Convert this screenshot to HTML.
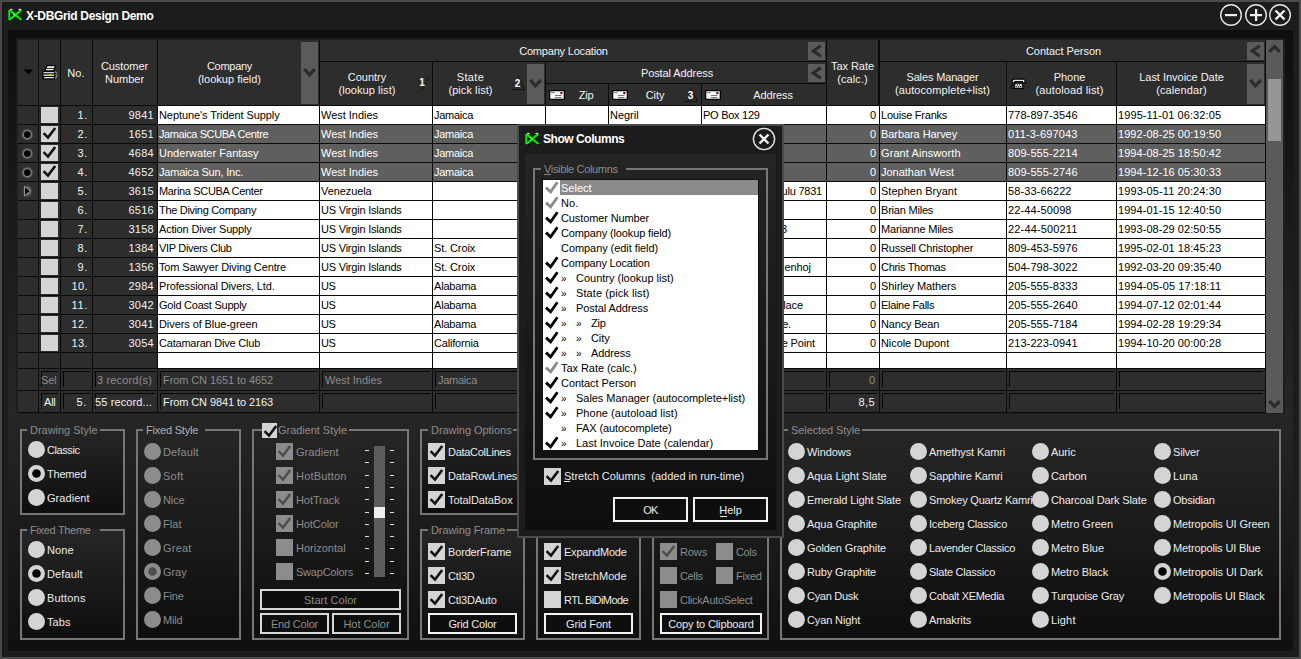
<!DOCTYPE html><html><head><meta charset="utf-8"><style>
html,body{margin:0;padding:0;}
body{width:1301px;height:659px;position:relative;overflow:hidden;background:#4b4b4b;font-family:'Liberation Sans',sans-serif;font-size:11px;}
div{position:absolute;}
.t{white-space:pre;line-height:13px;}
.cl{overflow:hidden;}
</style></head><body>
<div style="left:2px;top:2px;width:1297px;height:655px;background:#1c1c1c;"></div>
<div style="left:2px;top:2px;width:1px;height:655px;background:#161616;"></div>
<svg style="position:absolute;left:7px;top:8px;" width="17" height="14" viewBox="0 0 17 14"><path d="M3,2.5 L15.2,12.8 M15.2,2.5 L3,12.8" stroke="#000" stroke-width="2.6"/><path d="M2.4,1.9 L14.4,12 M14.4,1.9 L2.4,12" stroke="#00f000" stroke-width="2.2"/><path d="M2.2,2 L2.2,12" stroke="#00f000" stroke-width="1.8"/><path d="M3.2,1.4 L5.6,1.4 M11.4,1.4 L14.2,1.4" stroke="#fff" stroke-width="0.9"/><path d="M6,5.6 L8.4,7.6" stroke="#d8ffd8" stroke-width="0.8"/></svg>
<div class="t" style="top:10px;color:#ffffff;font-size:12px;font-weight:700;letter-spacing:-0.330px;left:26px;">X-DBGrid Design Demo</div>
<svg style="position:absolute;left:1219px;top:3px;" width="24" height="24" viewBox="0 0 24 24"><circle cx="12" cy="12" r="10.3" fill="none" stroke="#e6e6e6" stroke-width="1.4"/><rect x="6" y="11" width="12" height="2.2" fill="#f0f0f0"/></svg>
<svg style="position:absolute;left:1244px;top:3px;" width="24" height="24" viewBox="0 0 24 24"><circle cx="12" cy="12" r="10.3" fill="none" stroke="#e6e6e6" stroke-width="1.4"/><rect x="6" y="11" width="12" height="2.2" fill="#f0f0f0"/><rect x="11" y="6" width="2.2" height="12" fill="#f0f0f0"/></svg>
<svg style="position:absolute;left:1268px;top:3px;" width="24" height="24" viewBox="0 0 24 24"><circle cx="12" cy="12" r="10.3" fill="none" stroke="#e6e6e6" stroke-width="1.4"/><path d="M7.5,7.5 L16.5,16.5 M16.5,7.5 L7.5,16.5" stroke="#f0f0f0" stroke-width="2.4"/></svg>
<div style="left:8px;top:30px;width:1285px;height:383px;background:linear-gradient(#0e0e0e,#262626);"></div>
<div style="left:8px;top:413px;width:1285px;height:238px;background:linear-gradient(#262626,#101010);"></div>
<div style="left:16px;top:38px;width:1269px;height:376px;background:#1e1e1e;"></div>
<div style="left:18px;top:40px;width:1248px;height:373px;background:#0a0a0a;"></div>
<div style="left:18px;top:40px;width:20px;height:65px;background:#2d2d2d;"></div>
<div style="left:39px;top:40px;width:21px;height:65px;background:#2d2d2d;"></div>
<div style="left:61px;top:40px;width:31px;height:65px;background:#2d2d2d;"></div>
<div style="left:93px;top:40px;width:64px;height:65px;background:#2d2d2d;"></div>
<div style="left:158px;top:40px;width:161px;height:65px;background:#2d2d2d;"></div>
<div style="left:827px;top:40px;width:51px;height:65px;background:#2d2d2d;"></div>
<div style="left:320px;top:40px;width:506px;height:21px;background:#2d2d2d;"></div>
<div style="left:320px;top:62px;width:112px;height:43px;background:#2d2d2d;"></div>
<div style="left:433px;top:62px;width:112px;height:43px;background:#2d2d2d;"></div>
<div style="left:546px;top:62px;width:280px;height:21px;background:#2d2d2d;"></div>
<div style="left:546px;top:84px;width:62px;height:21px;background:#2d2d2d;"></div>
<div style="left:609px;top:84px;width:92px;height:21px;background:#2d2d2d;"></div>
<div style="left:702px;top:84px;width:124px;height:21px;background:#2d2d2d;"></div>
<div style="left:880px;top:40px;width:385px;height:21px;background:#2d2d2d;"></div>
<div style="left:880px;top:62px;width:126px;height:43px;background:#2d2d2d;"></div>
<div style="left:1007px;top:62px;width:109px;height:43px;background:#2d2d2d;"></div>
<div style="left:1117px;top:62px;width:148px;height:43px;background:#2d2d2d;"></div>
<div style="left:301px;top:42px;width:17px;height:62px;background:#5b5b5b;"></div>
<svg style="position:absolute;left:301px;top:42px;" width="17" height="62" viewBox="0 0 17 62"><polyline points="3.2,27.0 8.5,32.8 13.8,27.0" fill="none" stroke="#2b2b2b" stroke-width="3.3"/></svg>
<div style="left:527px;top:64px;width:17px;height:40px;background:#5b5b5b;"></div>
<svg style="position:absolute;left:527px;top:64px;" width="17" height="40" viewBox="0 0 17 40"><polyline points="3.2,16.0 8.5,21.8 13.8,16.0" fill="none" stroke="#2b2b2b" stroke-width="3.3"/></svg>
<div style="left:1247px;top:64px;width:17px;height:40px;background:#5b5b5b;"></div>
<svg style="position:absolute;left:1247px;top:64px;" width="17" height="40" viewBox="0 0 17 40"><polyline points="3.2,16.0 8.5,21.8 13.8,16.0" fill="none" stroke="#2b2b2b" stroke-width="3.3"/></svg>
<div style="left:808px;top:42px;width:17px;height:18px;background:#5b5b5b;"></div>
<svg style="position:absolute;left:808px;top:42px;" width="17" height="18" viewBox="0 0 17 18"><polyline points="12.8,3.8 5.3,9.0 12.8,14.2" fill="none" stroke="#2b2b2b" stroke-width="3.2"/></svg>
<div style="left:808px;top:64px;width:17px;height:18px;background:#5b5b5b;"></div>
<svg style="position:absolute;left:808px;top:64px;" width="17" height="18" viewBox="0 0 17 18"><polyline points="12.8,3.8 5.3,9.0 12.8,14.2" fill="none" stroke="#2b2b2b" stroke-width="3.2"/></svg>
<div style="left:1247px;top:42px;width:17px;height:18px;background:#5b5b5b;"></div>
<svg style="position:absolute;left:1247px;top:42px;" width="17" height="18" viewBox="0 0 17 18"><polyline points="12.8,3.8 5.3,9.0 12.8,14.2" fill="none" stroke="#2b2b2b" stroke-width="3.2"/></svg>
<svg style="position:absolute;left:23px;top:69px;" width="11" height="6" viewBox="0 0 11 6"><path d="M0.8,0.5 L10.2,0.5 L5.5,5.5 Z" fill="#000"/></svg>
<svg style="position:absolute;left:41px;top:64px;" width="18" height="16" viewBox="0 0 18 16"><path d="M6,1.6 L14.6,1.6 L12.6,7 L4,7 Z" fill="#fff" stroke="#000" stroke-width="1.3"/><rect x="6" y="3.9" width="7" height="0.9" fill="#000"/><rect x="1.3" y="7" width="13" height="8.6" rx="1.8" fill="#000"/><rect x="2.4" y="8.1" width="10.8" height="1.2" fill="#e6e6e6"/><rect x="2.4" y="10.5" width="10.8" height="1.5" fill="#d0d0d0"/><rect x="7.6" y="10.5" width="3" height="1.5" fill="#f0e000"/><rect x="3" y="13" width="9.8" height="1.3" fill="#e6e6e6"/><path d="M14,7.6 L16.4,9.6 M14.6,10.6 L16.4,12.2 M14,14.2 L16,12.8" stroke="#cfcfcf" stroke-width="0.9"/></svg>
<div class="t" style="top:67px;color:#f2f2f2;letter-spacing:0.158px;left:-124px;width:400px;text-align:center;">No.</div>
<div class="t" style="top:60px;color:#f2f2f2;letter-spacing:-0.073px;left:-75.5px;width:400px;text-align:center;">Customer</div>
<div class="t" style="top:73px;color:#f2f2f2;letter-spacing:-0.004px;left:-75.5px;width:400px;text-align:center;">Number</div>
<div class="t" style="top:60px;color:#f2f2f2;letter-spacing:-0.283px;left:29.5px;width:400px;text-align:center;">Company</div>
<div class="t" style="top:73px;color:#f2f2f2;letter-spacing:0.008px;left:29.5px;width:400px;text-align:center;">(lookup field)</div>
<div class="t" style="top:45px;color:#f2f2f2;letter-spacing:-0.196px;left:363.5px;width:400px;text-align:center;">Company Location</div>
<div class="t" style="top:71px;color:#f2f2f2;letter-spacing:0.010px;left:167px;width:400px;text-align:center;">Country</div>
<div class="t" style="top:84px;color:#f2f2f2;letter-spacing:0.065px;left:167px;width:400px;text-align:center;">(lookup list)</div>
<div class="t" style="top:71px;color:#f2f2f2;letter-spacing:0.383px;left:270.5px;width:400px;text-align:center;">State</div>
<div class="t" style="top:84px;color:#f2f2f2;letter-spacing:0.064px;left:270.5px;width:400px;text-align:center;">(pick list)</div>
<div class="t" style="top:67px;color:#f2f2f2;letter-spacing:-0.091px;left:477px;width:400px;text-align:center;">Postal Address</div>
<div class="t" style="top:89px;color:#f2f2f2;letter-spacing:-0.227px;left:386px;width:400px;text-align:center;">Zip</div>
<div class="t" style="top:89px;color:#f2f2f2;letter-spacing:-0.088px;left:455px;width:400px;text-align:center;">City</div>
<div class="t" style="top:89px;color:#f2f2f2;letter-spacing:-0.108px;left:573px;width:400px;text-align:center;">Address</div>
<div class="t" style="top:60px;color:#f2f2f2;letter-spacing:-0.040px;left:652.5px;width:400px;text-align:center;">Tax Rate</div>
<div class="t" style="top:73px;color:#f2f2f2;letter-spacing:0.092px;left:652.5px;width:400px;text-align:center;">(calc.)</div>
<div class="t" style="top:71px;color:#f2f2f2;letter-spacing:-0.146px;left:742.5px;width:400px;text-align:center;">Sales Manager</div>
<div class="t" style="top:84px;color:#f2f2f2;letter-spacing:0.097px;left:742.5px;width:400px;text-align:center;">(autocomplete+list)</div>
<div class="t" style="top:45px;color:#f2f2f2;letter-spacing:-0.052px;left:863.5px;width:400px;text-align:center;">Contact Person</div>
<div class="t" style="top:71px;color:#f2f2f2;letter-spacing:-0.042px;left:869.5px;width:400px;text-align:center;">Phone</div>
<div class="t" style="top:84px;color:#f2f2f2;letter-spacing:0.137px;left:869.5px;width:400px;text-align:center;">(autoload list)</div>
<div class="t" style="top:71px;color:#f2f2f2;letter-spacing:-0.024px;left:981.5px;width:400px;text-align:center;">Last Invoice Date</div>
<div class="t" style="top:84px;color:#f2f2f2;letter-spacing:0.107px;left:981.5px;width:400px;text-align:center;">(calendar)</div>
<svg style="position:absolute;left:415px;top:76px;" width="15" height="16" viewBox="0 0 15 16"><path d="M14,1 L7,14.5" fill="none" stroke="#111" stroke-width="1" stroke-dasharray="2,1"/><path d="M1,1 L7,14.5" fill="none" stroke="#262626" stroke-width="1"/><text x="7" y="10" font-family="Liberation Sans" font-weight="bold" font-size="10" fill="#fff" text-anchor="middle">1</text></svg>
<svg style="position:absolute;left:511px;top:75px;" width="15" height="16" viewBox="0 0 15 16"><path d="M7,0.5 L13.5,14.5 L0.5,14.5" fill="none" stroke="#111" stroke-width="1"/><text x="6.6" y="12.4" font-family="Liberation Sans" font-weight="bold" font-size="10" fill="#fff" text-anchor="middle">2</text></svg>
<svg style="position:absolute;left:684px;top:87px;" width="15" height="16" viewBox="0 0 15 16"><path d="M7,0.5 L13.5,14.5 L0.5,14.5" fill="none" stroke="#111" stroke-width="1"/><text x="6.6" y="12.4" font-family="Liberation Sans" font-weight="bold" font-size="10" fill="#fff" text-anchor="middle">3</text></svg>
<svg style="position:absolute;left:549px;top:90px;" width="16" height="10" viewBox="0 0 16 10"><rect x="0.65" y="0.65" width="14.7" height="8.7" rx="0.8" fill="#fafafa" stroke="#000" stroke-width="1.3"/><rect x="11.3" y="2" width="2.1" height="2.1" fill="#8a0000"/><rect x="2" y="2.3" width="3.6" height="0.8" fill="#555"/><rect x="6" y="5.2" width="6.5" height="0.8" fill="#555"/><rect x="6" y="7.1" width="6.5" height="0.8" fill="#555"/></svg>
<svg style="position:absolute;left:612px;top:90px;" width="16" height="10" viewBox="0 0 16 10"><rect x="0.65" y="0.65" width="14.7" height="8.7" rx="0.8" fill="#fafafa" stroke="#000" stroke-width="1.3"/><rect x="11.3" y="2" width="2.1" height="2.1" fill="#8a0000"/><rect x="2" y="2.3" width="3.6" height="0.8" fill="#555"/><rect x="6" y="5.2" width="6.5" height="0.8" fill="#555"/><rect x="6" y="7.1" width="6.5" height="0.8" fill="#555"/></svg>
<svg style="position:absolute;left:705px;top:90px;" width="16" height="10" viewBox="0 0 16 10"><rect x="0.65" y="0.65" width="14.7" height="8.7" rx="0.8" fill="#fafafa" stroke="#000" stroke-width="1.3"/><rect x="11.3" y="2" width="2.1" height="2.1" fill="#8a0000"/><rect x="2" y="2.3" width="3.6" height="0.8" fill="#555"/><rect x="6" y="5.2" width="6.5" height="0.8" fill="#555"/><rect x="6" y="7.1" width="6.5" height="0.8" fill="#555"/></svg>
<svg style="position:absolute;left:1009px;top:78px;" width="18" height="12" viewBox="0 0 18 12"><path d="M3.2,4.9 L3.2,2.6 Q4,1.1 5.2,1.1 L14,1.1 Q15.2,1.1 16,2.6 L16,4.9 L13.4,4.9 L13.4,3.6 L5.8,3.6 L5.8,4.9 Z" fill="#e6e6e6" stroke="#000" stroke-width="1.1"/><path d="M6.2,5.2 L13,5.2 L14.2,10.4 L5,10.4 Z" fill="#f2f2f2" stroke="#000" stroke-width="1.1"/><circle cx="8.4" cy="6.9" r="0.7" fill="#000"/><circle cx="10.6" cy="6.9" r="0.7" fill="#000"/><circle cx="7.2" cy="8.8" r="0.7" fill="#000"/><circle cx="9.5" cy="8.8" r="0.7" fill="#000"/><circle cx="11.8" cy="8.8" r="0.7" fill="#000"/><path d="M5,6.8 Q1.3,6.8 1.7,9.2 Q2.1,10.8 5,10.6" fill="none" stroke="#000" stroke-width="0.9"/></svg>
<div style="left:18px;top:106px;width:20px;height:18px;background:#2d2d2d;"></div>
<div style="left:39px;top:106px;width:21px;height:18px;background:#2d2d2d;"></div>
<div style="left:61px;top:106px;width:31px;height:18px;background:#2d2d2d;"></div>
<div style="left:93px;top:106px;width:64px;height:18px;background:#2d2d2d;"></div>
<div style="left:158px;top:106px;width:161px;height:18px;background:#ffffff;"></div>
<div style="left:320px;top:106px;width:112px;height:18px;background:#ffffff;"></div>
<div style="left:433px;top:106px;width:112px;height:18px;background:#ffffff;"></div>
<div style="left:546px;top:106px;width:62px;height:18px;background:#ffffff;"></div>
<div style="left:609px;top:106px;width:92px;height:18px;background:#ffffff;"></div>
<div style="left:702px;top:106px;width:124px;height:18px;background:#ffffff;"></div>
<div style="left:827px;top:106px;width:52px;height:18px;background:#ffffff;"></div>
<div style="left:880px;top:106px;width:126px;height:18px;background:#ffffff;"></div>
<div style="left:1007px;top:106px;width:109px;height:18px;background:#ffffff;"></div>
<div style="left:1117px;top:106px;width:148px;height:18px;background:#ffffff;"></div>
<div style="left:41px;top:107px;width:17px;height:16px;background:#d4d4d4;"></div>
<div class="t" style="top:109px;color:#f2f2f2;letter-spacing:0.706px;left:-212px;width:300px;text-align:right;">1.</div>
<div class="t" style="top:109px;color:#f2f2f2;letter-spacing:0.279px;left:-146px;width:300px;text-align:right;">9841</div>
<div class="t" style="top:109px;color:#000000;letter-spacing:-0.082px;left:159px;">Neptune&#x27;s Trident Supply</div>
<div class="t" style="top:109px;color:#000000;letter-spacing:-0.016px;left:321px;">West Indies</div>
<div class="t" style="top:109px;color:#000000;letter-spacing:-0.267px;left:434px;">Jamaica</div>
<div class="t" style="top:109px;color:#000000;letter-spacing:-0.022px;left:610px;">Negril</div>
<div class="t" style="top:109px;color:#000000;letter-spacing:-0.273px;left:703px;">PO Box 129</div>
<div class="t" style="top:109px;color:#000000;left:576px;width:300px;text-align:right;">0</div>
<div class="t" style="top:109px;color:#000000;letter-spacing:-0.230px;left:881px;">Louise Franks</div>
<div class="t" style="top:109px;color:#000000;letter-spacing:0.090px;left:1008px;">778-897-3546</div>
<div class="t" style="top:109px;color:#000000;letter-spacing:0.093px;left:1118px;">1995-11-01 06:32:05</div>
<div style="left:18px;top:125px;width:20px;height:18px;background:#2d2d2d;"></div>
<div style="left:39px;top:125px;width:21px;height:18px;background:#2d2d2d;"></div>
<div style="left:61px;top:125px;width:31px;height:18px;background:#2d2d2d;"></div>
<div style="left:93px;top:125px;width:64px;height:18px;background:#2d2d2d;"></div>
<div style="left:158px;top:125px;width:161px;height:18px;background:#5f5f5f;"></div>
<div style="left:320px;top:125px;width:112px;height:18px;background:#5f5f5f;"></div>
<div style="left:433px;top:125px;width:112px;height:18px;background:#5f5f5f;"></div>
<div style="left:546px;top:125px;width:62px;height:18px;background:#5f5f5f;"></div>
<div style="left:609px;top:125px;width:92px;height:18px;background:#5f5f5f;"></div>
<div style="left:702px;top:125px;width:124px;height:18px;background:#5f5f5f;"></div>
<div style="left:827px;top:125px;width:52px;height:18px;background:#5f5f5f;"></div>
<div style="left:880px;top:125px;width:126px;height:18px;background:#5f5f5f;"></div>
<div style="left:1007px;top:125px;width:109px;height:18px;background:#5f5f5f;"></div>
<div style="left:1117px;top:125px;width:148px;height:18px;background:#5f5f5f;"></div>
<div style="left:41px;top:126px;width:17px;height:16px;background:#d4d4d4;"></div>
<svg style="position:absolute;left:41px;top:125px;" width="17" height="17" viewBox="0 0 17 17"><polyline points="2.6,8.2 7,12.6 14.2,3" fill="none" stroke="#111" stroke-width="2.6" stroke-linecap="butt" stroke-linejoin="miter"/></svg>
<svg style="position:absolute;left:20px;top:127px;" width="15" height="15" viewBox="0 0 15 15"><defs><radialGradient id="gl1"><stop offset="0.55" stop-color="#bbb" stop-opacity="0.55"/><stop offset="1" stop-color="#2d2d2d" stop-opacity="0"/></radialGradient></defs><circle cx="7.3" cy="7.6" r="7" fill="url(#gl1)"/><circle cx="7.3" cy="7.6" r="4" fill="#000" stroke="#a8a8a8" stroke-width="0.8"/></svg>
<div class="t" style="top:128px;color:#f2f2f2;letter-spacing:0.706px;left:-212px;width:300px;text-align:right;">2.</div>
<div class="t" style="top:128px;color:#f2f2f2;letter-spacing:0.279px;left:-146px;width:300px;text-align:right;">1651</div>
<div class="t" style="top:128px;color:#ffffff;letter-spacing:-0.415px;left:159px;">Jamaica SCUBA Centre</div>
<div class="t" style="top:128px;color:#ffffff;letter-spacing:-0.016px;left:321px;">West Indies</div>
<div class="t" style="top:128px;color:#ffffff;letter-spacing:-0.267px;left:434px;">Jamaica</div>
<div class="t" style="top:128px;color:#ffffff;left:610px;"></div>
<div class="t" style="top:128px;color:#ffffff;left:576px;width:300px;text-align:right;">0</div>
<div class="t" style="top:128px;color:#ffffff;letter-spacing:-0.068px;left:881px;">Barbara Harvey</div>
<div class="t" style="top:128px;color:#ffffff;letter-spacing:0.159px;left:1008px;">011-3-697043</div>
<div class="t" style="top:128px;color:#ffffff;letter-spacing:0.050px;left:1118px;">1992-08-25 00:19:50</div>
<div style="left:18px;top:144px;width:20px;height:18px;background:#2d2d2d;"></div>
<div style="left:39px;top:144px;width:21px;height:18px;background:#2d2d2d;"></div>
<div style="left:61px;top:144px;width:31px;height:18px;background:#2d2d2d;"></div>
<div style="left:93px;top:144px;width:64px;height:18px;background:#2d2d2d;"></div>
<div style="left:158px;top:144px;width:161px;height:18px;background:#5f5f5f;"></div>
<div style="left:320px;top:144px;width:112px;height:18px;background:#5f5f5f;"></div>
<div style="left:433px;top:144px;width:112px;height:18px;background:#5f5f5f;"></div>
<div style="left:546px;top:144px;width:62px;height:18px;background:#5f5f5f;"></div>
<div style="left:609px;top:144px;width:92px;height:18px;background:#5f5f5f;"></div>
<div style="left:702px;top:144px;width:124px;height:18px;background:#5f5f5f;"></div>
<div style="left:827px;top:144px;width:52px;height:18px;background:#5f5f5f;"></div>
<div style="left:880px;top:144px;width:126px;height:18px;background:#5f5f5f;"></div>
<div style="left:1007px;top:144px;width:109px;height:18px;background:#5f5f5f;"></div>
<div style="left:1117px;top:144px;width:148px;height:18px;background:#5f5f5f;"></div>
<div style="left:41px;top:145px;width:17px;height:16px;background:#d4d4d4;"></div>
<svg style="position:absolute;left:41px;top:144px;" width="17" height="17" viewBox="0 0 17 17"><polyline points="2.6,8.2 7,12.6 14.2,3" fill="none" stroke="#111" stroke-width="2.6" stroke-linecap="butt" stroke-linejoin="miter"/></svg>
<svg style="position:absolute;left:20px;top:146px;" width="15" height="15" viewBox="0 0 15 15"><defs><radialGradient id="gl2"><stop offset="0.55" stop-color="#bbb" stop-opacity="0.55"/><stop offset="1" stop-color="#2d2d2d" stop-opacity="0"/></radialGradient></defs><circle cx="7.3" cy="7.6" r="7" fill="url(#gl2)"/><circle cx="7.3" cy="7.6" r="4" fill="#000" stroke="#a8a8a8" stroke-width="0.8"/></svg>
<div class="t" style="top:147px;color:#f2f2f2;letter-spacing:0.706px;left:-212px;width:300px;text-align:right;">3.</div>
<div class="t" style="top:147px;color:#f2f2f2;letter-spacing:0.279px;left:-146px;width:300px;text-align:right;">4684</div>
<div class="t" style="top:147px;color:#ffffff;letter-spacing:0.031px;left:159px;">Underwater Fantasy</div>
<div class="t" style="top:147px;color:#ffffff;letter-spacing:-0.016px;left:321px;">West Indies</div>
<div class="t" style="top:147px;color:#ffffff;letter-spacing:-0.267px;left:434px;">Jamaica</div>
<div class="t" style="top:147px;color:#ffffff;left:610px;"></div>
<div class="t" style="top:147px;color:#ffffff;left:576px;width:300px;text-align:right;">0</div>
<div class="t" style="top:147px;color:#ffffff;letter-spacing:0.089px;left:881px;">Grant Ainsworth</div>
<div class="t" style="top:147px;color:#ffffff;letter-spacing:0.090px;left:1008px;">809-555-2214</div>
<div class="t" style="top:147px;color:#ffffff;letter-spacing:0.050px;left:1118px;">1994-08-25 18:50:42</div>
<div style="left:18px;top:163px;width:20px;height:18px;background:#2d2d2d;"></div>
<div style="left:39px;top:163px;width:21px;height:18px;background:#2d2d2d;"></div>
<div style="left:61px;top:163px;width:31px;height:18px;background:#2d2d2d;"></div>
<div style="left:93px;top:163px;width:64px;height:18px;background:#2d2d2d;"></div>
<div style="left:158px;top:163px;width:161px;height:18px;background:#5f5f5f;"></div>
<div style="left:320px;top:163px;width:112px;height:18px;background:#5f5f5f;"></div>
<div style="left:433px;top:163px;width:112px;height:18px;background:#5f5f5f;"></div>
<div style="left:546px;top:163px;width:62px;height:18px;background:#5f5f5f;"></div>
<div style="left:609px;top:163px;width:92px;height:18px;background:#5f5f5f;"></div>
<div style="left:702px;top:163px;width:124px;height:18px;background:#5f5f5f;"></div>
<div style="left:827px;top:163px;width:52px;height:18px;background:#5f5f5f;"></div>
<div style="left:880px;top:163px;width:126px;height:18px;background:#5f5f5f;"></div>
<div style="left:1007px;top:163px;width:109px;height:18px;background:#5f5f5f;"></div>
<div style="left:1117px;top:163px;width:148px;height:18px;background:#5f5f5f;"></div>
<div style="left:41px;top:164px;width:17px;height:16px;background:#d4d4d4;"></div>
<svg style="position:absolute;left:41px;top:163px;" width="17" height="17" viewBox="0 0 17 17"><polyline points="2.6,8.2 7,12.6 14.2,3" fill="none" stroke="#111" stroke-width="2.6" stroke-linecap="butt" stroke-linejoin="miter"/></svg>
<svg style="position:absolute;left:20px;top:165px;" width="15" height="15" viewBox="0 0 15 15"><defs><radialGradient id="gl3"><stop offset="0.55" stop-color="#bbb" stop-opacity="0.55"/><stop offset="1" stop-color="#2d2d2d" stop-opacity="0"/></radialGradient></defs><circle cx="7.3" cy="7.6" r="7" fill="url(#gl3)"/><circle cx="7.3" cy="7.6" r="4" fill="#000" stroke="#a8a8a8" stroke-width="0.8"/></svg>
<div class="t" style="top:166px;color:#f2f2f2;letter-spacing:0.706px;left:-212px;width:300px;text-align:right;">4.</div>
<div class="t" style="top:166px;color:#f2f2f2;letter-spacing:0.279px;left:-146px;width:300px;text-align:right;">4652</div>
<div class="t" style="top:166px;color:#ffffff;letter-spacing:-0.196px;left:159px;">Jamaica Sun, Inc.</div>
<div class="t" style="top:166px;color:#ffffff;letter-spacing:-0.016px;left:321px;">West Indies</div>
<div class="t" style="top:166px;color:#ffffff;letter-spacing:-0.267px;left:434px;">Jamaica</div>
<div class="t" style="top:166px;color:#ffffff;left:610px;"></div>
<div class="t" style="top:166px;color:#ffffff;left:576px;width:300px;text-align:right;">0</div>
<div class="t" style="top:166px;color:#ffffff;letter-spacing:-0.007px;left:881px;">Jonathan West</div>
<div class="t" style="top:166px;color:#ffffff;letter-spacing:0.090px;left:1008px;">809-555-2746</div>
<div class="t" style="top:166px;color:#ffffff;letter-spacing:0.050px;left:1118px;">1994-12-16 05:30:33</div>
<div style="left:18px;top:182px;width:20px;height:18px;background:#2d2d2d;"></div>
<div style="left:39px;top:182px;width:21px;height:18px;background:#2d2d2d;"></div>
<div style="left:61px;top:182px;width:31px;height:18px;background:#2d2d2d;"></div>
<div style="left:93px;top:182px;width:64px;height:18px;background:#2d2d2d;"></div>
<div style="left:158px;top:182px;width:161px;height:18px;background:#ffffff;"></div>
<div style="left:320px;top:182px;width:112px;height:18px;background:#ffffff;"></div>
<div style="left:433px;top:182px;width:112px;height:18px;background:#ffffff;"></div>
<div style="left:546px;top:182px;width:62px;height:18px;background:#ffffff;"></div>
<div style="left:609px;top:182px;width:92px;height:18px;background:#ffffff;"></div>
<div style="left:702px;top:182px;width:124px;height:18px;background:#ffffff;"></div>
<div style="left:827px;top:182px;width:52px;height:18px;background:#ffffff;"></div>
<div style="left:880px;top:182px;width:126px;height:18px;background:#ffffff;"></div>
<div style="left:1007px;top:182px;width:109px;height:18px;background:#ffffff;"></div>
<div style="left:1117px;top:182px;width:148px;height:18px;background:#ffffff;"></div>
<div style="left:41px;top:183px;width:17px;height:16px;background:#d4d4d4;"></div>
<svg style="position:absolute;left:18px;top:182px;" width="20" height="18" viewBox="0 0 20 18"><defs><radialGradient id="gtri"><stop offset="0.45" stop-color="#aaa" stop-opacity="0.5"/><stop offset="1" stop-color="#2d2d2d" stop-opacity="0"/></radialGradient></defs><ellipse cx="9.5" cy="9" rx="6" ry="7.5" fill="url(#gtri)"/><path d="M6.6,4.4 L12.4,9.2 L6.6,14 Z" fill="#000" stroke="#a0a0a0" stroke-width="1" stroke-linejoin="round"/></svg>
<div class="t" style="top:185px;color:#f2f2f2;letter-spacing:0.706px;left:-212px;width:300px;text-align:right;">5.</div>
<div class="t" style="top:185px;color:#f2f2f2;letter-spacing:0.279px;left:-146px;width:300px;text-align:right;">3615</div>
<div class="t" style="top:185px;color:#000000;letter-spacing:-0.339px;left:159px;">Marina SCUBA Center</div>
<div class="t" style="top:185px;color:#000000;letter-spacing:-0.088px;left:321px;">Venezuela</div>
<div class="t" style="top:185px;color:#000000;left:434px;"></div>
<div class="t" style="top:185px;color:#000000;left:610px;"></div>
<div class="t" style="top:185px;color:#000000;letter-spacing:-0.224px;left:522px;width:300px;text-align:right;">PO Box 82438 Zulu 7831</div>
<div class="t" style="top:185px;color:#000000;left:576px;width:300px;text-align:right;">0</div>
<div class="t" style="top:185px;color:#000000;letter-spacing:0.018px;left:881px;">Stephen Bryant</div>
<div class="t" style="top:185px;color:#000000;letter-spacing:0.110px;left:1008px;">58-33-66222</div>
<div class="t" style="top:185px;color:#000000;letter-spacing:0.093px;left:1118px;">1993-05-11 20:24:30</div>
<div style="left:18px;top:201px;width:20px;height:18px;background:#2d2d2d;"></div>
<div style="left:39px;top:201px;width:21px;height:18px;background:#2d2d2d;"></div>
<div style="left:61px;top:201px;width:31px;height:18px;background:#2d2d2d;"></div>
<div style="left:93px;top:201px;width:64px;height:18px;background:#2d2d2d;"></div>
<div style="left:158px;top:201px;width:161px;height:18px;background:#ffffff;"></div>
<div style="left:320px;top:201px;width:112px;height:18px;background:#ffffff;"></div>
<div style="left:433px;top:201px;width:112px;height:18px;background:#ffffff;"></div>
<div style="left:546px;top:201px;width:62px;height:18px;background:#ffffff;"></div>
<div style="left:609px;top:201px;width:92px;height:18px;background:#ffffff;"></div>
<div style="left:702px;top:201px;width:124px;height:18px;background:#ffffff;"></div>
<div style="left:827px;top:201px;width:52px;height:18px;background:#ffffff;"></div>
<div style="left:880px;top:201px;width:126px;height:18px;background:#ffffff;"></div>
<div style="left:1007px;top:201px;width:109px;height:18px;background:#ffffff;"></div>
<div style="left:1117px;top:201px;width:148px;height:18px;background:#ffffff;"></div>
<div style="left:41px;top:202px;width:17px;height:16px;background:#d4d4d4;"></div>
<div class="t" style="top:204px;color:#f2f2f2;letter-spacing:0.706px;left:-212px;width:300px;text-align:right;">6.</div>
<div class="t" style="top:204px;color:#f2f2f2;letter-spacing:0.279px;left:-146px;width:300px;text-align:right;">6516</div>
<div class="t" style="top:204px;color:#000000;letter-spacing:-0.312px;left:159px;">The Diving Company</div>
<div class="t" style="top:204px;color:#000000;letter-spacing:-0.210px;left:321px;">US Virgin Islands</div>
<div class="t" style="top:204px;color:#000000;left:434px;"></div>
<div class="t" style="top:204px;color:#000000;left:610px;"></div>
<div class="t" style="top:204px;color:#000000;left:576px;width:300px;text-align:right;">0</div>
<div class="t" style="top:204px;color:#000000;letter-spacing:-0.210px;left:881px;">Brian Miles</div>
<div class="t" style="top:204px;color:#000000;letter-spacing:0.110px;left:1008px;">22-44-50098</div>
<div class="t" style="top:204px;color:#000000;letter-spacing:0.050px;left:1118px;">1994-01-15 12:40:50</div>
<div style="left:18px;top:220px;width:20px;height:18px;background:#2d2d2d;"></div>
<div style="left:39px;top:220px;width:21px;height:18px;background:#2d2d2d;"></div>
<div style="left:61px;top:220px;width:31px;height:18px;background:#2d2d2d;"></div>
<div style="left:93px;top:220px;width:64px;height:18px;background:#2d2d2d;"></div>
<div style="left:158px;top:220px;width:161px;height:18px;background:#ffffff;"></div>
<div style="left:320px;top:220px;width:112px;height:18px;background:#ffffff;"></div>
<div style="left:433px;top:220px;width:112px;height:18px;background:#ffffff;"></div>
<div style="left:546px;top:220px;width:62px;height:18px;background:#ffffff;"></div>
<div style="left:609px;top:220px;width:92px;height:18px;background:#ffffff;"></div>
<div style="left:702px;top:220px;width:124px;height:18px;background:#ffffff;"></div>
<div style="left:827px;top:220px;width:52px;height:18px;background:#ffffff;"></div>
<div style="left:880px;top:220px;width:126px;height:18px;background:#ffffff;"></div>
<div style="left:1007px;top:220px;width:109px;height:18px;background:#ffffff;"></div>
<div style="left:1117px;top:220px;width:148px;height:18px;background:#ffffff;"></div>
<div style="left:41px;top:221px;width:17px;height:16px;background:#d4d4d4;"></div>
<div class="t" style="top:223px;color:#f2f2f2;letter-spacing:0.706px;left:-212px;width:300px;text-align:right;">7.</div>
<div class="t" style="top:223px;color:#f2f2f2;letter-spacing:0.279px;left:-146px;width:300px;text-align:right;">3158</div>
<div class="t" style="top:223px;color:#000000;letter-spacing:-0.179px;left:159px;">Action Diver Supply</div>
<div class="t" style="top:223px;color:#000000;letter-spacing:-0.210px;left:321px;">US Virgin Islands</div>
<div class="t" style="top:223px;color:#000000;left:434px;"></div>
<div class="t" style="top:223px;color:#000000;left:610px;"></div>
<div class="t" style="top:223px;color:#000000;letter-spacing:-0.033px;left:487px;width:300px;text-align:right;">Blue Spar Box #3</div>
<div class="t" style="top:223px;color:#000000;left:576px;width:300px;text-align:right;">0</div>
<div class="t" style="top:223px;color:#000000;letter-spacing:-0.178px;left:881px;">Marianne Miles</div>
<div class="t" style="top:223px;color:#000000;letter-spacing:0.159px;left:1008px;">22-44-500211</div>
<div class="t" style="top:223px;color:#000000;letter-spacing:0.050px;left:1118px;">1993-08-29 02:50:55</div>
<div style="left:18px;top:239px;width:20px;height:18px;background:#2d2d2d;"></div>
<div style="left:39px;top:239px;width:21px;height:18px;background:#2d2d2d;"></div>
<div style="left:61px;top:239px;width:31px;height:18px;background:#2d2d2d;"></div>
<div style="left:93px;top:239px;width:64px;height:18px;background:#2d2d2d;"></div>
<div style="left:158px;top:239px;width:161px;height:18px;background:#ffffff;"></div>
<div style="left:320px;top:239px;width:112px;height:18px;background:#ffffff;"></div>
<div style="left:433px;top:239px;width:112px;height:18px;background:#ffffff;"></div>
<div style="left:546px;top:239px;width:62px;height:18px;background:#ffffff;"></div>
<div style="left:609px;top:239px;width:92px;height:18px;background:#ffffff;"></div>
<div style="left:702px;top:239px;width:124px;height:18px;background:#ffffff;"></div>
<div style="left:827px;top:239px;width:52px;height:18px;background:#ffffff;"></div>
<div style="left:880px;top:239px;width:126px;height:18px;background:#ffffff;"></div>
<div style="left:1007px;top:239px;width:109px;height:18px;background:#ffffff;"></div>
<div style="left:1117px;top:239px;width:148px;height:18px;background:#ffffff;"></div>
<div style="left:41px;top:240px;width:17px;height:16px;background:#d4d4d4;"></div>
<div class="t" style="top:242px;color:#f2f2f2;letter-spacing:0.706px;left:-212px;width:300px;text-align:right;">8.</div>
<div class="t" style="top:242px;color:#f2f2f2;letter-spacing:0.279px;left:-146px;width:300px;text-align:right;">1384</div>
<div class="t" style="top:242px;color:#000000;letter-spacing:-0.323px;left:159px;">VIP Divers Club</div>
<div class="t" style="top:242px;color:#000000;letter-spacing:-0.210px;left:321px;">US Virgin Islands</div>
<div class="t" style="top:242px;color:#000000;letter-spacing:-0.121px;left:434px;">St. Croix</div>
<div class="t" style="top:242px;color:#000000;left:610px;"></div>
<div class="t" style="top:242px;color:#000000;left:576px;width:300px;text-align:right;">0</div>
<div class="t" style="top:242px;color:#000000;letter-spacing:-0.204px;left:881px;">Russell Christopher</div>
<div class="t" style="top:242px;color:#000000;letter-spacing:0.090px;left:1008px;">809-453-5976</div>
<div class="t" style="top:242px;color:#000000;letter-spacing:0.050px;left:1118px;">1995-02-01 18:45:23</div>
<div style="left:18px;top:258px;width:20px;height:18px;background:#2d2d2d;"></div>
<div style="left:39px;top:258px;width:21px;height:18px;background:#2d2d2d;"></div>
<div style="left:61px;top:258px;width:31px;height:18px;background:#2d2d2d;"></div>
<div style="left:93px;top:258px;width:64px;height:18px;background:#2d2d2d;"></div>
<div style="left:158px;top:258px;width:161px;height:18px;background:#ffffff;"></div>
<div style="left:320px;top:258px;width:112px;height:18px;background:#ffffff;"></div>
<div style="left:433px;top:258px;width:112px;height:18px;background:#ffffff;"></div>
<div style="left:546px;top:258px;width:62px;height:18px;background:#ffffff;"></div>
<div style="left:609px;top:258px;width:92px;height:18px;background:#ffffff;"></div>
<div style="left:702px;top:258px;width:124px;height:18px;background:#ffffff;"></div>
<div style="left:827px;top:258px;width:52px;height:18px;background:#ffffff;"></div>
<div style="left:880px;top:258px;width:126px;height:18px;background:#ffffff;"></div>
<div style="left:1007px;top:258px;width:109px;height:18px;background:#ffffff;"></div>
<div style="left:1117px;top:258px;width:148px;height:18px;background:#ffffff;"></div>
<div style="left:41px;top:259px;width:17px;height:16px;background:#d4d4d4;"></div>
<div class="t" style="top:261px;color:#f2f2f2;letter-spacing:0.706px;left:-212px;width:300px;text-align:right;">9.</div>
<div class="t" style="top:261px;color:#f2f2f2;letter-spacing:0.279px;left:-146px;width:300px;text-align:right;">1356</div>
<div class="t" style="top:261px;color:#000000;letter-spacing:-0.130px;left:159px;">Tom Sawyer Diving Centre</div>
<div class="t" style="top:261px;color:#000000;letter-spacing:-0.210px;left:321px;">US Virgin Islands</div>
<div class="t" style="top:261px;color:#000000;letter-spacing:-0.121px;left:434px;">St. Croix</div>
<div class="t" style="top:261px;color:#000000;left:610px;"></div>
<div class="t" style="top:261px;color:#000000;letter-spacing:-0.068px;left:511px;width:300px;text-align:right;">632-1 Third Frydenhoj</div>
<div class="t" style="top:261px;color:#000000;left:576px;width:300px;text-align:right;">0</div>
<div class="t" style="top:261px;color:#000000;letter-spacing:-0.305px;left:881px;">Chris Thomas</div>
<div class="t" style="top:261px;color:#000000;letter-spacing:0.090px;left:1008px;">504-798-3022</div>
<div class="t" style="top:261px;color:#000000;letter-spacing:0.050px;left:1118px;">1992-03-20 09:35:40</div>
<div style="left:18px;top:277px;width:20px;height:18px;background:#2d2d2d;"></div>
<div style="left:39px;top:277px;width:21px;height:18px;background:#2d2d2d;"></div>
<div style="left:61px;top:277px;width:31px;height:18px;background:#2d2d2d;"></div>
<div style="left:93px;top:277px;width:64px;height:18px;background:#2d2d2d;"></div>
<div style="left:158px;top:277px;width:161px;height:18px;background:#ffffff;"></div>
<div style="left:320px;top:277px;width:112px;height:18px;background:#ffffff;"></div>
<div style="left:433px;top:277px;width:112px;height:18px;background:#ffffff;"></div>
<div style="left:546px;top:277px;width:62px;height:18px;background:#ffffff;"></div>
<div style="left:609px;top:277px;width:92px;height:18px;background:#ffffff;"></div>
<div style="left:702px;top:277px;width:124px;height:18px;background:#ffffff;"></div>
<div style="left:827px;top:277px;width:52px;height:18px;background:#ffffff;"></div>
<div style="left:880px;top:277px;width:126px;height:18px;background:#ffffff;"></div>
<div style="left:1007px;top:277px;width:109px;height:18px;background:#ffffff;"></div>
<div style="left:1117px;top:277px;width:148px;height:18px;background:#ffffff;"></div>
<div style="left:41px;top:278px;width:17px;height:16px;background:#d4d4d4;"></div>
<div class="t" style="top:280px;color:#f2f2f2;letter-spacing:0.434px;left:-212px;width:300px;text-align:right;">10.</div>
<div class="t" style="top:280px;color:#f2f2f2;letter-spacing:0.279px;left:-146px;width:300px;text-align:right;">2984</div>
<div class="t" style="top:280px;color:#000000;letter-spacing:-0.145px;left:159px;">Professional Divers, Ltd.</div>
<div class="t" style="top:280px;color:#000000;letter-spacing:-0.341px;left:321px;">US</div>
<div class="t" style="top:280px;color:#000000;letter-spacing:-0.189px;left:434px;">Alabama</div>
<div class="t" style="top:280px;color:#000000;left:610px;"></div>
<div class="t" style="top:280px;color:#000000;left:576px;width:300px;text-align:right;">0</div>
<div class="t" style="top:280px;color:#000000;letter-spacing:-0.088px;left:881px;">Shirley Mathers</div>
<div class="t" style="top:280px;color:#000000;letter-spacing:0.090px;left:1008px;">205-555-8333</div>
<div class="t" style="top:280px;color:#000000;letter-spacing:0.093px;left:1118px;">1994-05-05 17:18:11</div>
<div style="left:18px;top:296px;width:20px;height:18px;background:#2d2d2d;"></div>
<div style="left:39px;top:296px;width:21px;height:18px;background:#2d2d2d;"></div>
<div style="left:61px;top:296px;width:31px;height:18px;background:#2d2d2d;"></div>
<div style="left:93px;top:296px;width:64px;height:18px;background:#2d2d2d;"></div>
<div style="left:158px;top:296px;width:161px;height:18px;background:#ffffff;"></div>
<div style="left:320px;top:296px;width:112px;height:18px;background:#ffffff;"></div>
<div style="left:433px;top:296px;width:112px;height:18px;background:#ffffff;"></div>
<div style="left:546px;top:296px;width:62px;height:18px;background:#ffffff;"></div>
<div style="left:609px;top:296px;width:92px;height:18px;background:#ffffff;"></div>
<div style="left:702px;top:296px;width:124px;height:18px;background:#ffffff;"></div>
<div style="left:827px;top:296px;width:52px;height:18px;background:#ffffff;"></div>
<div style="left:880px;top:296px;width:126px;height:18px;background:#ffffff;"></div>
<div style="left:1007px;top:296px;width:109px;height:18px;background:#ffffff;"></div>
<div style="left:1117px;top:296px;width:148px;height:18px;background:#ffffff;"></div>
<div style="left:41px;top:297px;width:17px;height:16px;background:#d4d4d4;"></div>
<div class="t" style="top:299px;color:#f2f2f2;letter-spacing:0.705px;left:-212px;width:300px;text-align:right;">11.</div>
<div class="t" style="top:299px;color:#f2f2f2;letter-spacing:0.279px;left:-146px;width:300px;text-align:right;">3042</div>
<div class="t" style="top:299px;color:#000000;letter-spacing:-0.242px;left:159px;">Gold Coast Supply</div>
<div class="t" style="top:299px;color:#000000;letter-spacing:-0.341px;left:321px;">US</div>
<div class="t" style="top:299px;color:#000000;letter-spacing:-0.189px;left:434px;">Alabama</div>
<div class="t" style="top:299px;color:#000000;left:610px;"></div>
<div class="t" style="top:299px;color:#000000;letter-spacing:-0.124px;left:503px;width:300px;text-align:right;">223-B Houston Place</div>
<div class="t" style="top:299px;color:#000000;left:576px;width:300px;text-align:right;">0</div>
<div class="t" style="top:299px;color:#000000;letter-spacing:-0.313px;left:881px;">Elaine Falls</div>
<div class="t" style="top:299px;color:#000000;letter-spacing:0.090px;left:1008px;">205-555-2640</div>
<div class="t" style="top:299px;color:#000000;letter-spacing:0.050px;left:1118px;">1994-07-12 02:01:44</div>
<div style="left:18px;top:315px;width:20px;height:18px;background:#2d2d2d;"></div>
<div style="left:39px;top:315px;width:21px;height:18px;background:#2d2d2d;"></div>
<div style="left:61px;top:315px;width:31px;height:18px;background:#2d2d2d;"></div>
<div style="left:93px;top:315px;width:64px;height:18px;background:#2d2d2d;"></div>
<div style="left:158px;top:315px;width:161px;height:18px;background:#ffffff;"></div>
<div style="left:320px;top:315px;width:112px;height:18px;background:#ffffff;"></div>
<div style="left:433px;top:315px;width:112px;height:18px;background:#ffffff;"></div>
<div style="left:546px;top:315px;width:62px;height:18px;background:#ffffff;"></div>
<div style="left:609px;top:315px;width:92px;height:18px;background:#ffffff;"></div>
<div style="left:702px;top:315px;width:124px;height:18px;background:#ffffff;"></div>
<div style="left:827px;top:315px;width:52px;height:18px;background:#ffffff;"></div>
<div style="left:880px;top:315px;width:126px;height:18px;background:#ffffff;"></div>
<div style="left:1007px;top:315px;width:109px;height:18px;background:#ffffff;"></div>
<div style="left:1117px;top:315px;width:148px;height:18px;background:#ffffff;"></div>
<div style="left:41px;top:316px;width:17px;height:16px;background:#d4d4d4;"></div>
<div class="t" style="top:318px;color:#f2f2f2;letter-spacing:0.434px;left:-212px;width:300px;text-align:right;">12.</div>
<div class="t" style="top:318px;color:#f2f2f2;letter-spacing:0.279px;left:-146px;width:300px;text-align:right;">3041</div>
<div class="t" style="top:318px;color:#000000;letter-spacing:-0.084px;left:159px;">Divers of Blue-green</div>
<div class="t" style="top:318px;color:#000000;letter-spacing:-0.341px;left:321px;">US</div>
<div class="t" style="top:318px;color:#000000;letter-spacing:-0.189px;left:434px;">Alabama</div>
<div class="t" style="top:318px;color:#000000;left:610px;"></div>
<div class="t" style="top:318px;color:#000000;letter-spacing:-0.186px;left:491px;width:300px;text-align:right;">634 Complex Ave.</div>
<div class="t" style="top:318px;color:#000000;left:576px;width:300px;text-align:right;">0</div>
<div class="t" style="top:318px;color:#000000;letter-spacing:-0.184px;left:881px;">Nancy Bean</div>
<div class="t" style="top:318px;color:#000000;letter-spacing:0.090px;left:1008px;">205-555-7184</div>
<div class="t" style="top:318px;color:#000000;letter-spacing:0.050px;left:1118px;">1994-02-28 19:29:34</div>
<div style="left:18px;top:334px;width:20px;height:18px;background:#2d2d2d;"></div>
<div style="left:39px;top:334px;width:21px;height:18px;background:#2d2d2d;"></div>
<div style="left:61px;top:334px;width:31px;height:18px;background:#2d2d2d;"></div>
<div style="left:93px;top:334px;width:64px;height:18px;background:#2d2d2d;"></div>
<div style="left:158px;top:334px;width:161px;height:18px;background:#ffffff;"></div>
<div style="left:320px;top:334px;width:112px;height:18px;background:#ffffff;"></div>
<div style="left:433px;top:334px;width:112px;height:18px;background:#ffffff;"></div>
<div style="left:546px;top:334px;width:62px;height:18px;background:#ffffff;"></div>
<div style="left:609px;top:334px;width:92px;height:18px;background:#ffffff;"></div>
<div style="left:702px;top:334px;width:124px;height:18px;background:#ffffff;"></div>
<div style="left:827px;top:334px;width:52px;height:18px;background:#ffffff;"></div>
<div style="left:880px;top:334px;width:126px;height:18px;background:#ffffff;"></div>
<div style="left:1007px;top:334px;width:109px;height:18px;background:#ffffff;"></div>
<div style="left:1117px;top:334px;width:148px;height:18px;background:#ffffff;"></div>
<div style="left:41px;top:335px;width:17px;height:16px;background:#d4d4d4;"></div>
<div class="t" style="top:337px;color:#f2f2f2;letter-spacing:0.434px;left:-212px;width:300px;text-align:right;">13.</div>
<div class="t" style="top:337px;color:#f2f2f2;letter-spacing:0.279px;left:-146px;width:300px;text-align:right;">3054</div>
<div class="t" style="top:337px;color:#000000;letter-spacing:-0.213px;left:159px;">Catamaran Dive Club</div>
<div class="t" style="top:337px;color:#000000;letter-spacing:-0.341px;left:321px;">US</div>
<div class="t" style="top:337px;color:#000000;letter-spacing:-0.187px;left:434px;">California</div>
<div class="t" style="top:337px;color:#000000;left:610px;"></div>
<div class="t" style="top:337px;color:#000000;letter-spacing:-0.130px;left:515px;width:300px;text-align:right;">Box 264 Pleasure Point</div>
<div class="t" style="top:337px;color:#000000;left:576px;width:300px;text-align:right;">0</div>
<div class="t" style="top:337px;color:#000000;letter-spacing:-0.076px;left:881px;">Nicole Dupont</div>
<div class="t" style="top:337px;color:#000000;letter-spacing:0.090px;left:1008px;">213-223-0941</div>
<div class="t" style="top:337px;color:#000000;letter-spacing:0.050px;left:1118px;">1994-10-20 00:00:28</div>
<div style="left:18px;top:353px;width:20px;height:15px;background:#2d2d2d;"></div>
<div style="left:39px;top:353px;width:21px;height:15px;background:#2d2d2d;"></div>
<div style="left:61px;top:353px;width:31px;height:15px;background:#2d2d2d;"></div>
<div style="left:93px;top:353px;width:64px;height:15px;background:#2d2d2d;"></div>
<div style="left:158px;top:353px;width:161px;height:15px;background:#ffffff;"></div>
<div style="left:320px;top:353px;width:112px;height:15px;background:#ffffff;"></div>
<div style="left:433px;top:353px;width:112px;height:15px;background:#ffffff;"></div>
<div style="left:546px;top:353px;width:62px;height:15px;background:#ffffff;"></div>
<div style="left:609px;top:353px;width:92px;height:15px;background:#ffffff;"></div>
<div style="left:702px;top:353px;width:124px;height:15px;background:#ffffff;"></div>
<div style="left:827px;top:353px;width:52px;height:15px;background:#ffffff;"></div>
<div style="left:880px;top:353px;width:126px;height:15px;background:#ffffff;"></div>
<div style="left:1007px;top:353px;width:109px;height:15px;background:#ffffff;"></div>
<div style="left:1117px;top:353px;width:148px;height:15px;background:#ffffff;"></div>
<div style="left:18px;top:369px;width:20px;height:21px;background:#2d2d2d;"></div>
<div style="left:39px;top:369px;width:21px;height:21px;background:#2d2d2d;"></div>
<div style="left:41px;top:371px;width:17px;height:1px;background:#060606;"></div>
<div style="left:41px;top:371px;width:1px;height:16px;background:#060606;"></div>
<div style="left:61px;top:369px;width:31px;height:21px;background:#2d2d2d;"></div>
<div style="left:63px;top:371px;width:27px;height:1px;background:#060606;"></div>
<div style="left:63px;top:371px;width:1px;height:16px;background:#060606;"></div>
<div style="left:93px;top:369px;width:64px;height:21px;background:#2d2d2d;"></div>
<div style="left:95px;top:371px;width:60px;height:1px;background:#060606;"></div>
<div style="left:95px;top:371px;width:1px;height:16px;background:#060606;"></div>
<div style="left:158px;top:369px;width:161px;height:21px;background:#2d2d2d;"></div>
<div style="left:160px;top:371px;width:157px;height:1px;background:#060606;"></div>
<div style="left:160px;top:371px;width:1px;height:16px;background:#060606;"></div>
<div style="left:320px;top:369px;width:112px;height:21px;background:#2d2d2d;"></div>
<div style="left:322px;top:371px;width:108px;height:1px;background:#060606;"></div>
<div style="left:322px;top:371px;width:1px;height:16px;background:#060606;"></div>
<div style="left:433px;top:369px;width:112px;height:21px;background:#2d2d2d;"></div>
<div style="left:435px;top:371px;width:108px;height:1px;background:#060606;"></div>
<div style="left:435px;top:371px;width:1px;height:16px;background:#060606;"></div>
<div style="left:546px;top:369px;width:62px;height:21px;background:#2d2d2d;"></div>
<div style="left:548px;top:371px;width:58px;height:1px;background:#060606;"></div>
<div style="left:548px;top:371px;width:1px;height:16px;background:#060606;"></div>
<div style="left:609px;top:369px;width:92px;height:21px;background:#2d2d2d;"></div>
<div style="left:611px;top:371px;width:88px;height:1px;background:#060606;"></div>
<div style="left:611px;top:371px;width:1px;height:16px;background:#060606;"></div>
<div style="left:702px;top:369px;width:124px;height:21px;background:#2d2d2d;"></div>
<div style="left:704px;top:371px;width:120px;height:1px;background:#060606;"></div>
<div style="left:704px;top:371px;width:1px;height:16px;background:#060606;"></div>
<div style="left:827px;top:369px;width:52px;height:21px;background:#2d2d2d;"></div>
<div style="left:829px;top:371px;width:48px;height:1px;background:#060606;"></div>
<div style="left:829px;top:371px;width:1px;height:16px;background:#060606;"></div>
<div style="left:880px;top:369px;width:126px;height:21px;background:#2d2d2d;"></div>
<div style="left:882px;top:371px;width:122px;height:1px;background:#060606;"></div>
<div style="left:882px;top:371px;width:1px;height:16px;background:#060606;"></div>
<div style="left:1007px;top:369px;width:109px;height:21px;background:#2d2d2d;"></div>
<div style="left:1009px;top:371px;width:105px;height:1px;background:#060606;"></div>
<div style="left:1009px;top:371px;width:1px;height:16px;background:#060606;"></div>
<div style="left:1117px;top:369px;width:148px;height:21px;background:#2d2d2d;"></div>
<div style="left:1119px;top:371px;width:144px;height:1px;background:#060606;"></div>
<div style="left:1119px;top:371px;width:1px;height:16px;background:#060606;"></div>
<div style="left:18px;top:391px;width:20px;height:21px;background:#2d2d2d;"></div>
<div style="left:39px;top:391px;width:21px;height:21px;background:#2d2d2d;"></div>
<div style="left:41px;top:393px;width:17px;height:1px;background:#060606;"></div>
<div style="left:41px;top:393px;width:1px;height:16px;background:#060606;"></div>
<div style="left:61px;top:391px;width:31px;height:21px;background:#2d2d2d;"></div>
<div style="left:63px;top:393px;width:27px;height:1px;background:#060606;"></div>
<div style="left:63px;top:393px;width:1px;height:16px;background:#060606;"></div>
<div style="left:93px;top:391px;width:64px;height:21px;background:#2d2d2d;"></div>
<div style="left:95px;top:393px;width:60px;height:1px;background:#060606;"></div>
<div style="left:95px;top:393px;width:1px;height:16px;background:#060606;"></div>
<div style="left:158px;top:391px;width:161px;height:21px;background:#2d2d2d;"></div>
<div style="left:160px;top:393px;width:157px;height:1px;background:#060606;"></div>
<div style="left:160px;top:393px;width:1px;height:16px;background:#060606;"></div>
<div style="left:320px;top:391px;width:112px;height:21px;background:#2d2d2d;"></div>
<div style="left:322px;top:393px;width:108px;height:1px;background:#060606;"></div>
<div style="left:322px;top:393px;width:1px;height:16px;background:#060606;"></div>
<div style="left:433px;top:391px;width:112px;height:21px;background:#2d2d2d;"></div>
<div style="left:435px;top:393px;width:108px;height:1px;background:#060606;"></div>
<div style="left:435px;top:393px;width:1px;height:16px;background:#060606;"></div>
<div style="left:546px;top:391px;width:62px;height:21px;background:#2d2d2d;"></div>
<div style="left:548px;top:393px;width:58px;height:1px;background:#060606;"></div>
<div style="left:548px;top:393px;width:1px;height:16px;background:#060606;"></div>
<div style="left:609px;top:391px;width:92px;height:21px;background:#2d2d2d;"></div>
<div style="left:611px;top:393px;width:88px;height:1px;background:#060606;"></div>
<div style="left:611px;top:393px;width:1px;height:16px;background:#060606;"></div>
<div style="left:702px;top:391px;width:124px;height:21px;background:#2d2d2d;"></div>
<div style="left:704px;top:393px;width:120px;height:1px;background:#060606;"></div>
<div style="left:704px;top:393px;width:1px;height:16px;background:#060606;"></div>
<div style="left:827px;top:391px;width:52px;height:21px;background:#2d2d2d;"></div>
<div style="left:829px;top:393px;width:48px;height:1px;background:#060606;"></div>
<div style="left:829px;top:393px;width:1px;height:16px;background:#060606;"></div>
<div style="left:880px;top:391px;width:126px;height:21px;background:#2d2d2d;"></div>
<div style="left:882px;top:393px;width:122px;height:1px;background:#060606;"></div>
<div style="left:882px;top:393px;width:1px;height:16px;background:#060606;"></div>
<div style="left:1007px;top:391px;width:109px;height:21px;background:#2d2d2d;"></div>
<div style="left:1009px;top:393px;width:105px;height:1px;background:#060606;"></div>
<div style="left:1009px;top:393px;width:1px;height:16px;background:#060606;"></div>
<div style="left:1117px;top:391px;width:148px;height:21px;background:#2d2d2d;"></div>
<div style="left:1119px;top:393px;width:144px;height:1px;background:#060606;"></div>
<div style="left:1119px;top:393px;width:1px;height:16px;background:#060606;"></div>
<div class="t" style="top:374px;color:#8c8c8c;letter-spacing:-0.102px;left:41px;">Sel</div>
<div class="t" style="top:374px;color:#8c8c8c;letter-spacing:0.174px;left:-148px;width:300px;text-align:right;">3 record(s)</div>
<div class="t" style="top:374px;color:#8c8c8c;letter-spacing:-0.090px;left:163px;">From CN 1651 to 4652</div>
<div class="t" style="top:374px;color:#8c8c8c;letter-spacing:-0.016px;left:325px;">West Indies</div>
<div class="t" style="top:374px;color:#8c8c8c;letter-spacing:-0.267px;left:438px;">Jamaica</div>
<div class="t" style="top:374px;color:#8c8c8c;left:575px;width:300px;text-align:right;">0</div>
<div class="t" style="top:396px;color:#f2f2f2;letter-spacing:-0.211px;left:44px;">All</div>
<div class="t" style="top:396px;color:#f2f2f2;letter-spacing:0.706px;left:-213px;width:300px;text-align:right;">5.</div>
<div class="t" style="top:396px;color:#f2f2f2;letter-spacing:0.122px;left:95px;">55 record...</div>
<div class="t" style="top:396px;color:#f2f2f2;letter-spacing:-0.090px;left:163px;">From CN 9841 to 2163</div>
<div class="t" style="top:396px;color:#f2f2f2;letter-spacing:0.434px;left:575px;width:300px;text-align:right;">8,5</div>
<div style="left:1266px;top:40px;width:17px;height:373px;background:#5a5a5a;"></div>
<div style="left:1268px;top:79px;width:13px;height:62px;background:#969696;"></div>
<svg style="position:absolute;left:1266px;top:41px;" width="17" height="16" viewBox="0 0 17 16"><polyline points="3.3,10.8 8.5,5.6 13.7,10.8" fill="none" stroke="#2b2b2b" stroke-width="3.2"/></svg>
<svg style="position:absolute;left:1266px;top:396px;" width="17" height="16" viewBox="0 0 17 16"><polyline points="3.3,5.2 8.5,10.4 13.7,5.2" fill="none" stroke="#2b2b2b" stroke-width="3.2"/></svg>
<div style="left:20px;top:429px;width:105px;height:86px;background:linear-gradient(#262626,#0e0e0e);"></div>
<div style="left:20px;top:429px;width:2px;height:86px;background:#767676;"></div>
<div style="left:123px;top:429px;width:2px;height:86px;background:#767676;"></div>
<div style="left:20px;top:513px;width:105px;height:2px;background:#767676;"></div>
<div style="left:20px;top:429px;width:7px;height:2px;background:#767676;"></div>
<div style="left:100px;top:429px;width:25px;height:2px;background:#767676;"></div>
<div class="t" style="top:424px;color:#8c8c8c;letter-spacing:-0.020px;left:30px;">Drawing Style</div>
<svg style="position:absolute;left:28px;top:441px;" width="17" height="17" viewBox="0 0 17 17"><circle cx="8.5" cy="8.5" r="8.5" fill="#d4d4d4"/></svg>
<div class="t" style="top:444px;color:#ececec;letter-spacing:-0.408px;left:47px;">Classic</div>
<svg style="position:absolute;left:28px;top:465px;" width="17" height="17" viewBox="0 0 17 17"><circle cx="8.5" cy="8.5" r="8.5" fill="#d4d4d4"/><circle cx="8.5" cy="8.5" r="4.3" fill="#000"/></svg>
<div class="t" style="top:468px;color:#ececec;letter-spacing:-0.210px;left:47px;">Themed</div>
<svg style="position:absolute;left:28px;top:489px;" width="17" height="17" viewBox="0 0 17 17"><circle cx="8.5" cy="8.5" r="8.5" fill="#d4d4d4"/></svg>
<div class="t" style="top:492px;color:#ececec;letter-spacing:0.050px;left:47px;">Gradient</div>
<div style="left:20px;top:529px;width:105px;height:111px;background:linear-gradient(#262626,#0e0e0e);"></div>
<div style="left:20px;top:529px;width:2px;height:111px;background:#767676;"></div>
<div style="left:123px;top:529px;width:2px;height:111px;background:#767676;"></div>
<div style="left:20px;top:638px;width:105px;height:2px;background:#767676;"></div>
<div style="left:20px;top:529px;width:7px;height:2px;background:#767676;"></div>
<div style="left:100px;top:529px;width:25px;height:2px;background:#767676;"></div>
<div class="t" style="top:524px;color:#8c8c8c;letter-spacing:-0.309px;left:30px;">Fixed Theme</div>
<svg style="position:absolute;left:28px;top:541px;" width="17" height="17" viewBox="0 0 17 17"><circle cx="8.5" cy="8.5" r="8.5" fill="#d4d4d4"/></svg>
<div class="t" style="top:544px;color:#ececec;letter-spacing:0.076px;left:47px;">None</div>
<svg style="position:absolute;left:28px;top:565px;" width="17" height="17" viewBox="0 0 17 17"><circle cx="8.5" cy="8.5" r="8.5" fill="#d4d4d4"/><circle cx="8.5" cy="8.5" r="4.3" fill="#000"/></svg>
<div class="t" style="top:568px;color:#ececec;letter-spacing:0.106px;left:47px;">Default</div>
<svg style="position:absolute;left:28px;top:589px;" width="17" height="17" viewBox="0 0 17 17"><circle cx="8.5" cy="8.5" r="8.5" fill="#d4d4d4"/></svg>
<div class="t" style="top:592px;color:#ececec;letter-spacing:0.184px;left:47px;">Buttons</div>
<svg style="position:absolute;left:28px;top:613px;" width="17" height="17" viewBox="0 0 17 17"><circle cx="8.5" cy="8.5" r="8.5" fill="#d4d4d4"/></svg>
<div class="t" style="top:616px;color:#ececec;letter-spacing:0.088px;left:47px;">Tabs</div>
<div style="left:136px;top:429px;width:105px;height:211px;background:linear-gradient(#262626,#0e0e0e);"></div>
<div style="left:136px;top:429px;width:2px;height:211px;background:#767676;"></div>
<div style="left:239px;top:429px;width:2px;height:211px;background:#767676;"></div>
<div style="left:136px;top:638px;width:105px;height:2px;background:#767676;"></div>
<div style="left:136px;top:429px;width:7px;height:2px;background:#767676;"></div>
<div style="left:205px;top:429px;width:36px;height:2px;background:#767676;"></div>
<div class="t" style="top:424px;color:#b0b0b0;letter-spacing:-0.211px;left:146px;">Fixed Style</div>
<svg style="position:absolute;left:144px;top:443px;" width="17" height="17" viewBox="0 0 17 17"><circle cx="8.5" cy="8.5" r="8.5" fill="#8c8c8c"/></svg>
<div class="t" style="top:446px;color:#8c8c8c;letter-spacing:0.106px;left:163px;">Default</div>
<svg style="position:absolute;left:144px;top:467px;" width="17" height="17" viewBox="0 0 17 17"><circle cx="8.5" cy="8.5" r="8.5" fill="#8c8c8c"/></svg>
<div class="t" style="top:470px;color:#8c8c8c;letter-spacing:0.255px;left:163px;">Soft</div>
<svg style="position:absolute;left:144px;top:491px;" width="17" height="17" viewBox="0 0 17 17"><circle cx="8.5" cy="8.5" r="8.5" fill="#8c8c8c"/></svg>
<div class="t" style="top:494px;color:#8c8c8c;letter-spacing:-0.104px;left:163px;">Nice</div>
<svg style="position:absolute;left:144px;top:515px;" width="17" height="17" viewBox="0 0 17 17"><circle cx="8.5" cy="8.5" r="8.5" fill="#8c8c8c"/></svg>
<div class="t" style="top:518px;color:#8c8c8c;letter-spacing:0.064px;left:163px;">Flat</div>
<svg style="position:absolute;left:144px;top:539px;" width="17" height="17" viewBox="0 0 17 17"><circle cx="8.5" cy="8.5" r="8.5" fill="#8c8c8c"/></svg>
<div class="t" style="top:542px;color:#8c8c8c;letter-spacing:0.217px;left:163px;">Great</div>
<svg style="position:absolute;left:144px;top:563px;" width="17" height="17" viewBox="0 0 17 17"><circle cx="8.5" cy="8.5" r="8.5" fill="#8c8c8c"/><circle cx="8.5" cy="8.5" r="4.3" fill="#4e4e4e"/></svg>
<div class="t" style="top:566px;color:#8c8c8c;letter-spacing:-0.061px;left:163px;">Gray</div>
<svg style="position:absolute;left:144px;top:587px;" width="17" height="17" viewBox="0 0 17 17"><circle cx="8.5" cy="8.5" r="8.5" fill="#8c8c8c"/></svg>
<div class="t" style="top:590px;color:#8c8c8c;letter-spacing:-0.202px;left:163px;">Fine</div>
<svg style="position:absolute;left:144px;top:611px;" width="17" height="17" viewBox="0 0 17 17"><circle cx="8.5" cy="8.5" r="8.5" fill="#8c8c8c"/></svg>
<div class="t" style="top:614px;color:#8c8c8c;letter-spacing:-0.143px;left:163px;">Mild</div>
<div style="left:252px;top:429px;width:157px;height:211px;background:linear-gradient(#262626,#0e0e0e);"></div>
<div style="left:252px;top:429px;width:2px;height:211px;background:#767676;"></div>
<div style="left:407px;top:429px;width:2px;height:211px;background:#767676;"></div>
<div style="left:252px;top:638px;width:157px;height:2px;background:#767676;"></div>
<div style="left:252px;top:429px;width:23px;height:2px;background:#767676;"></div>
<div style="left:349px;top:429px;width:60px;height:2px;background:#767676;"></div>
<div class="t" style="top:424px;color:#8c8c8c;letter-spacing:-0.043px;left:278px;">Gradient Style</div>
<div style="left:262px;top:423px;width:15px;height:15px;background:#d4d4d4;"></div>
<svg style="position:absolute;left:262px;top:423px;" width="17" height="17" viewBox="0 0 17 17"><polyline points="2.6,8.2 7,12.6 14.2,3" fill="none" stroke="#111" stroke-width="2.6" stroke-linecap="butt" stroke-linejoin="miter"/></svg>
<div style="left:276px;top:443px;width:17px;height:17px;background:#8c8c8c;"></div>
<svg style="position:absolute;left:276px;top:443px;" width="17" height="17" viewBox="0 0 17 17"><polyline points="2.6,8.2 7,12.6 14.2,3" fill="none" stroke="#4e4e4e" stroke-width="2.6" stroke-linecap="butt" stroke-linejoin="miter"/></svg>
<div class="t" style="top:446px;color:#8c8c8c;letter-spacing:0.050px;left:296px;">Gradient</div>
<div style="left:276px;top:467px;width:17px;height:17px;background:#8c8c8c;"></div>
<svg style="position:absolute;left:276px;top:467px;" width="17" height="17" viewBox="0 0 17 17"><polyline points="2.6,8.2 7,12.6 14.2,3" fill="none" stroke="#4e4e4e" stroke-width="2.6" stroke-linecap="butt" stroke-linejoin="miter"/></svg>
<div class="t" style="top:470px;color:#8c8c8c;letter-spacing:0.186px;left:296px;">HotButton</div>
<div style="left:276px;top:491px;width:17px;height:17px;background:#8c8c8c;"></div>
<svg style="position:absolute;left:276px;top:491px;" width="17" height="17" viewBox="0 0 17 17"><polyline points="2.6,8.2 7,12.6 14.2,3" fill="none" stroke="#4e4e4e" stroke-width="2.6" stroke-linecap="butt" stroke-linejoin="miter"/></svg>
<div class="t" style="top:494px;color:#8c8c8c;letter-spacing:-0.077px;left:296px;">HotTrack</div>
<div style="left:276px;top:515px;width:17px;height:17px;background:#8c8c8c;"></div>
<svg style="position:absolute;left:276px;top:515px;" width="17" height="17" viewBox="0 0 17 17"><polyline points="2.6,8.2 7,12.6 14.2,3" fill="none" stroke="#4e4e4e" stroke-width="2.6" stroke-linecap="butt" stroke-linejoin="miter"/></svg>
<div class="t" style="top:518px;color:#8c8c8c;letter-spacing:-0.101px;left:296px;">HotColor</div>
<div style="left:276px;top:539px;width:17px;height:17px;background:#8c8c8c;"></div>
<div class="t" style="top:542px;color:#8c8c8c;letter-spacing:0.007px;left:296px;">Horizontal</div>
<div style="left:276px;top:563px;width:17px;height:17px;background:#8c8c8c;"></div>
<div class="t" style="top:566px;color:#8c8c8c;letter-spacing:-0.221px;left:296px;">SwapColors</div>
<div style="left:374px;top:446px;width:11px;height:131px;background:#5c5c5c;"></div>
<div style="left:374px;top:507px;width:11px;height:11px;background:#f0f0f0;"></div>
<div style="left:365px;top:450px;width:4px;height:1px;background:#e0e0e0;"></div>
<div style="left:390px;top:450px;width:4px;height:1px;background:#e0e0e0;"></div>
<div style="left:365px;top:462px;width:4px;height:1px;background:#e0e0e0;"></div>
<div style="left:390px;top:462px;width:4px;height:1px;background:#e0e0e0;"></div>
<div style="left:365px;top:475px;width:4px;height:1px;background:#e0e0e0;"></div>
<div style="left:390px;top:475px;width:4px;height:1px;background:#e0e0e0;"></div>
<div style="left:365px;top:487px;width:4px;height:1px;background:#e0e0e0;"></div>
<div style="left:390px;top:487px;width:4px;height:1px;background:#e0e0e0;"></div>
<div style="left:365px;top:499px;width:4px;height:1px;background:#e0e0e0;"></div>
<div style="left:390px;top:499px;width:4px;height:1px;background:#e0e0e0;"></div>
<div style="left:365px;top:512px;width:4px;height:1px;background:#e0e0e0;"></div>
<div style="left:390px;top:512px;width:4px;height:1px;background:#e0e0e0;"></div>
<div style="left:365px;top:524px;width:4px;height:1px;background:#e0e0e0;"></div>
<div style="left:390px;top:524px;width:4px;height:1px;background:#e0e0e0;"></div>
<div style="left:365px;top:536px;width:4px;height:1px;background:#e0e0e0;"></div>
<div style="left:390px;top:536px;width:4px;height:1px;background:#e0e0e0;"></div>
<div style="left:365px;top:548px;width:4px;height:1px;background:#e0e0e0;"></div>
<div style="left:390px;top:548px;width:4px;height:1px;background:#e0e0e0;"></div>
<div style="left:365px;top:561px;width:4px;height:1px;background:#e0e0e0;"></div>
<div style="left:390px;top:561px;width:4px;height:1px;background:#e0e0e0;"></div>
<div style="left:365px;top:573px;width:4px;height:1px;background:#e0e0e0;"></div>
<div style="left:390px;top:573px;width:4px;height:1px;background:#e0e0e0;"></div>
<div style="left:260px;top:589px;width:141px;height:21px;background:#0e0e0e;box-sizing:border-box;border:2px solid #d8d8d8;"></div>
<div class="t" style="top:594px;color:#8c8c8c;letter-spacing:0.047px;left:130.5px;width:400px;text-align:center;">Start Color</div>
<div style="left:260px;top:613px;width:69px;height:21px;background:#0e0e0e;box-sizing:border-box;border:2px solid #d8d8d8;"></div>
<div class="t" style="top:618px;color:#8c8c8c;letter-spacing:-0.202px;left:94.5px;width:400px;text-align:center;">End Color</div>
<div style="left:332px;top:613px;width:69px;height:21px;background:#0e0e0e;box-sizing:border-box;border:2px solid #d8d8d8;"></div>
<div class="t" style="top:618px;color:#8c8c8c;letter-spacing:-0.041px;left:166.5px;width:400px;text-align:center;">Hot Color</div>
<div style="left:420px;top:429px;width:110px;height:86px;background:linear-gradient(#262626,#0e0e0e);"></div>
<div style="left:420px;top:429px;width:2px;height:86px;background:#767676;"></div>
<div style="left:528px;top:429px;width:2px;height:86px;background:#767676;"></div>
<div style="left:420px;top:513px;width:110px;height:2px;background:#767676;"></div>
<div style="left:420px;top:429px;width:8px;height:2px;background:#767676;"></div>
<div style="left:513px;top:429px;width:17px;height:2px;background:#767676;"></div>
<div class="t" style="top:424px;color:#8c8c8c;letter-spacing:-0.049px;left:431px;">Drawing Options</div>
<div style="left:428px;top:443px;width:17px;height:17px;background:#d4d4d4;"></div>
<svg style="position:absolute;left:428px;top:443px;" width="17" height="17" viewBox="0 0 17 17"><polyline points="2.6,8.2 7,12.6 14.2,3" fill="none" stroke="#111" stroke-width="2.6" stroke-linecap="butt" stroke-linejoin="miter"/></svg>
<div class="t" style="top:446px;color:#ececec;letter-spacing:-0.287px;left:448px;">DataColLines</div>
<div style="left:428px;top:467px;width:17px;height:17px;background:#d4d4d4;"></div>
<svg style="position:absolute;left:428px;top:467px;" width="17" height="17" viewBox="0 0 17 17"><polyline points="2.6,8.2 7,12.6 14.2,3" fill="none" stroke="#111" stroke-width="2.6" stroke-linecap="butt" stroke-linejoin="miter"/></svg>
<div class="t" style="top:470px;color:#ececec;letter-spacing:-0.204px;left:448px;">DataRowLines</div>
<div style="left:428px;top:491px;width:17px;height:17px;background:#d4d4d4;"></div>
<svg style="position:absolute;left:428px;top:491px;" width="17" height="17" viewBox="0 0 17 17"><polyline points="2.6,8.2 7,12.6 14.2,3" fill="none" stroke="#111" stroke-width="2.6" stroke-linecap="butt" stroke-linejoin="miter"/></svg>
<div class="t" style="top:494px;color:#ececec;letter-spacing:-0.070px;left:448px;">TotalDataBox</div>
<div style="left:420px;top:529px;width:105px;height:111px;background:linear-gradient(#262626,#0e0e0e);"></div>
<div style="left:420px;top:529px;width:2px;height:111px;background:#767676;"></div>
<div style="left:523px;top:529px;width:2px;height:111px;background:#767676;"></div>
<div style="left:420px;top:638px;width:105px;height:2px;background:#767676;"></div>
<div style="left:420px;top:529px;width:8px;height:2px;background:#767676;"></div>
<div style="left:507px;top:529px;width:18px;height:2px;background:#767676;"></div>
<div class="t" style="top:524px;color:#8c8c8c;letter-spacing:-0.084px;left:431px;">Drawing Frame</div>
<div style="left:428px;top:543px;width:17px;height:17px;background:#d4d4d4;"></div>
<svg style="position:absolute;left:428px;top:543px;" width="17" height="17" viewBox="0 0 17 17"><polyline points="2.6,8.2 7,12.6 14.2,3" fill="none" stroke="#111" stroke-width="2.6" stroke-linecap="butt" stroke-linejoin="miter"/></svg>
<div class="t" style="top:546px;color:#ececec;letter-spacing:-0.154px;left:448px;">BorderFrame</div>
<div style="left:428px;top:567px;width:17px;height:17px;background:#d4d4d4;"></div>
<svg style="position:absolute;left:428px;top:567px;" width="17" height="17" viewBox="0 0 17 17"><polyline points="2.6,8.2 7,12.6 14.2,3" fill="none" stroke="#111" stroke-width="2.6" stroke-linecap="butt" stroke-linejoin="miter"/></svg>
<div class="t" style="top:570px;color:#ececec;letter-spacing:-0.183px;left:448px;">Ctl3D</div>
<div style="left:428px;top:591px;width:17px;height:17px;background:#d4d4d4;"></div>
<svg style="position:absolute;left:428px;top:591px;" width="17" height="17" viewBox="0 0 17 17"><polyline points="2.6,8.2 7,12.6 14.2,3" fill="none" stroke="#111" stroke-width="2.6" stroke-linecap="butt" stroke-linejoin="miter"/></svg>
<div class="t" style="top:594px;color:#ececec;letter-spacing:-0.171px;left:448px;">Ctl3DAuto</div>
<div style="left:428px;top:613px;width:89px;height:21px;background:#0e0e0e;box-sizing:border-box;border:2px solid #f4f4f4;"></div>
<div class="t" style="top:618px;color:#ececec;letter-spacing:-0.202px;left:272.5px;width:400px;text-align:center;">Grid Color</div>
<div style="left:536px;top:440px;width:105px;height:200px;background:linear-gradient(#262626,#0e0e0e);"></div>
<div style="left:536px;top:440px;width:2px;height:200px;background:#767676;"></div>
<div style="left:639px;top:440px;width:2px;height:200px;background:#767676;"></div>
<div style="left:536px;top:638px;width:105px;height:2px;background:#767676;"></div>
<div style="left:536px;top:440px;width:105px;height:2px;background:#767676;"></div>
<div style="left:544px;top:543px;width:17px;height:17px;background:#d4d4d4;"></div>
<svg style="position:absolute;left:544px;top:543px;" width="17" height="17" viewBox="0 0 17 17"><polyline points="2.6,8.2 7,12.6 14.2,3" fill="none" stroke="#111" stroke-width="2.6" stroke-linecap="butt" stroke-linejoin="miter"/></svg>
<div class="t" style="top:546px;color:#ececec;letter-spacing:-0.223px;left:564px;">ExpandMode</div>
<div style="left:544px;top:567px;width:17px;height:17px;background:#d4d4d4;"></div>
<svg style="position:absolute;left:544px;top:567px;" width="17" height="17" viewBox="0 0 17 17"><polyline points="2.6,8.2 7,12.6 14.2,3" fill="none" stroke="#111" stroke-width="2.6" stroke-linecap="butt" stroke-linejoin="miter"/></svg>
<div class="t" style="top:570px;color:#ececec;letter-spacing:0.020px;left:564px;">StretchMode</div>
<div style="left:544px;top:591px;width:17px;height:17px;background:#d4d4d4;"></div>
<div class="t" style="top:594px;color:#ececec;letter-spacing:-0.568px;left:564px;">RTL BiDiMode</div>
<div style="left:544px;top:613px;width:89px;height:21px;background:#0e0e0e;box-sizing:border-box;border:2px solid #f4f4f4;"></div>
<div class="t" style="top:618px;color:#ececec;letter-spacing:-0.084px;left:388.5px;width:400px;text-align:center;">Grid Font</div>
<div style="left:652px;top:440px;width:117px;height:200px;background:linear-gradient(#262626,#0e0e0e);"></div>
<div style="left:652px;top:440px;width:2px;height:200px;background:#767676;"></div>
<div style="left:767px;top:440px;width:2px;height:200px;background:#767676;"></div>
<div style="left:652px;top:638px;width:117px;height:2px;background:#767676;"></div>
<div style="left:652px;top:440px;width:117px;height:2px;background:#767676;"></div>
<div style="left:660px;top:543px;width:17px;height:17px;background:#8c8c8c;"></div>
<svg style="position:absolute;left:660px;top:543px;" width="17" height="17" viewBox="0 0 17 17"><polyline points="2.6,8.2 7,12.6 14.2,3" fill="none" stroke="#4e4e4e" stroke-width="2.6" stroke-linecap="butt" stroke-linejoin="miter"/></svg>
<div class="t" style="top:546px;color:#8c8c8c;letter-spacing:-0.104px;left:680px;">Rows</div>
<div style="left:716px;top:543px;width:17px;height:17px;background:#8c8c8c;"></div>
<div class="t" style="top:546px;color:#8c8c8c;letter-spacing:-0.354px;left:736px;">Cols</div>
<div style="left:660px;top:567px;width:17px;height:17px;background:#8c8c8c;"></div>
<div class="t" style="top:570px;color:#8c8c8c;letter-spacing:-0.371px;left:680px;">Cells</div>
<div style="left:716px;top:567px;width:17px;height:17px;background:#8c8c8c;"></div>
<div class="t" style="top:570px;color:#8c8c8c;letter-spacing:-0.261px;left:736px;">Fixed</div>
<div style="left:660px;top:591px;width:17px;height:17px;background:#8c8c8c;"></div>
<div class="t" style="top:594px;color:#8c8c8c;letter-spacing:-0.296px;left:680px;">ClickAutoSelect</div>
<div style="left:660px;top:613px;width:102px;height:21px;background:#0e0e0e;box-sizing:border-box;border:2px solid #f4f4f4;"></div>
<div class="t" style="top:618px;color:#ececec;letter-spacing:-0.145px;left:511.0px;width:400px;text-align:center;">Copy to Clipboard</div>
<div style="left:780px;top:429px;width:501px;height:211px;background:linear-gradient(#262626,#0e0e0e);"></div>
<div style="left:780px;top:429px;width:2px;height:211px;background:#767676;"></div>
<div style="left:1279px;top:429px;width:2px;height:211px;background:#767676;"></div>
<div style="left:780px;top:638px;width:501px;height:2px;background:#767676;"></div>
<div style="left:780px;top:429px;width:8px;height:2px;background:#767676;"></div>
<div style="left:862px;top:429px;width:419px;height:2px;background:#767676;"></div>
<div class="t" style="top:424px;color:#8c8c8c;letter-spacing:-0.088px;left:791px;">Selected Style</div>
<div class="t" style="top:446px;color:#ececec;letter-spacing:-0.075px;left:807px;">Windows</div>
<div class="t" style="top:470px;color:#ececec;letter-spacing:-0.071px;left:807px;">Aqua Light Slate</div>
<div class="t" style="top:494px;color:#ececec;letter-spacing:-0.100px;left:807px;">Emerald Light Slate</div>
<div class="t" style="top:518px;color:#ececec;letter-spacing:-0.064px;left:807px;">Aqua Graphite</div>
<div class="t" style="top:542px;color:#ececec;letter-spacing:-0.108px;left:807px;">Golden Graphite</div>
<div class="t" style="top:566px;color:#ececec;letter-spacing:-0.141px;left:807px;">Ruby Graphite</div>
<div class="t" style="top:590px;color:#ececec;letter-spacing:-0.300px;left:807px;">Cyan Dusk</div>
<div class="t" style="top:614px;color:#ececec;letter-spacing:-0.132px;left:807px;">Cyan Night</div>
<div class="t" style="top:446px;color:#ececec;letter-spacing:-0.110px;left:929px;">Amethyst Kamri</div>
<div class="t" style="top:470px;color:#ececec;letter-spacing:-0.159px;left:929px;">Sapphire Kamri</div>
<div class="t" style="top:494px;color:#ececec;letter-spacing:-0.210px;left:929px;">Smokey Quartz Kamri</div>
<div class="t" style="top:518px;color:#ececec;letter-spacing:-0.202px;left:929px;">Iceberg Classico</div>
<div class="t" style="top:542px;color:#ececec;letter-spacing:-0.259px;left:929px;">Lavender Classico</div>
<div class="t" style="top:566px;color:#ececec;letter-spacing:-0.257px;left:929px;">Slate Classico</div>
<div class="t" style="top:590px;color:#ececec;letter-spacing:-0.314px;left:929px;">Cobalt XEMedia</div>
<div class="t" style="top:614px;color:#ececec;letter-spacing:-0.085px;left:929px;">Amakrits</div>
<div class="t" style="top:446px;color:#ececec;letter-spacing:-0.092px;left:1051px;">Auric</div>
<div class="t" style="top:470px;color:#ececec;letter-spacing:-0.080px;left:1051px;">Carbon</div>
<div class="t" style="top:494px;color:#ececec;letter-spacing:-0.149px;left:1051px;">Charcoal Dark Slate</div>
<div class="t" style="top:518px;color:#ececec;letter-spacing:0.032px;left:1051px;">Metro Green</div>
<div class="t" style="top:542px;color:#ececec;letter-spacing:-0.010px;left:1051px;">Metro Blue</div>
<div class="t" style="top:566px;color:#ececec;letter-spacing:-0.089px;left:1051px;">Metro Black</div>
<div class="t" style="top:590px;color:#ececec;letter-spacing:-0.165px;left:1051px;">Turquoise Gray</div>
<div class="t" style="top:614px;color:#ececec;letter-spacing:0.148px;left:1051px;">Light</div>
<div class="t" style="top:446px;color:#ececec;letter-spacing:-0.153px;left:1173px;">Silver</div>
<div class="t" style="top:470px;color:#ececec;letter-spacing:0.029px;left:1173px;">Luna</div>
<div class="t" style="top:494px;color:#ececec;letter-spacing:-0.228px;left:1173px;">Obsidian</div>
<div class="t" style="top:518px;color:#ececec;letter-spacing:-0.097px;left:1173px;">Metropolis UI Green</div>
<div class="t" style="top:542px;color:#ececec;letter-spacing:-0.126px;left:1173px;">Metropolis UI Blue</div>
<div class="t" style="top:566px;color:#ececec;letter-spacing:-0.082px;left:1173px;">Metropolis UI Dark</div>
<div class="t" style="top:590px;color:#ececec;letter-spacing:-0.167px;left:1173px;">Metropolis UI Black</div>
<svg style="position:absolute;left:788px;top:443px;" width="17" height="17" viewBox="0 0 17 17"><circle cx="8.5" cy="8.5" r="8.5" fill="#d4d4d4"/></svg>
<svg style="position:absolute;left:788px;top:467px;" width="17" height="17" viewBox="0 0 17 17"><circle cx="8.5" cy="8.5" r="8.5" fill="#d4d4d4"/></svg>
<svg style="position:absolute;left:788px;top:491px;" width="17" height="17" viewBox="0 0 17 17"><circle cx="8.5" cy="8.5" r="8.5" fill="#d4d4d4"/></svg>
<svg style="position:absolute;left:788px;top:515px;" width="17" height="17" viewBox="0 0 17 17"><circle cx="8.5" cy="8.5" r="8.5" fill="#d4d4d4"/></svg>
<svg style="position:absolute;left:788px;top:539px;" width="17" height="17" viewBox="0 0 17 17"><circle cx="8.5" cy="8.5" r="8.5" fill="#d4d4d4"/></svg>
<svg style="position:absolute;left:788px;top:563px;" width="17" height="17" viewBox="0 0 17 17"><circle cx="8.5" cy="8.5" r="8.5" fill="#d4d4d4"/></svg>
<svg style="position:absolute;left:788px;top:587px;" width="17" height="17" viewBox="0 0 17 17"><circle cx="8.5" cy="8.5" r="8.5" fill="#d4d4d4"/></svg>
<svg style="position:absolute;left:788px;top:611px;" width="17" height="17" viewBox="0 0 17 17"><circle cx="8.5" cy="8.5" r="8.5" fill="#d4d4d4"/></svg>
<svg style="position:absolute;left:910px;top:443px;" width="17" height="17" viewBox="0 0 17 17"><circle cx="8.5" cy="8.5" r="8.5" fill="#d4d4d4"/></svg>
<svg style="position:absolute;left:910px;top:467px;" width="17" height="17" viewBox="0 0 17 17"><circle cx="8.5" cy="8.5" r="8.5" fill="#d4d4d4"/></svg>
<svg style="position:absolute;left:910px;top:491px;" width="17" height="17" viewBox="0 0 17 17"><circle cx="8.5" cy="8.5" r="8.5" fill="#d4d4d4"/></svg>
<svg style="position:absolute;left:910px;top:515px;" width="17" height="17" viewBox="0 0 17 17"><circle cx="8.5" cy="8.5" r="8.5" fill="#d4d4d4"/></svg>
<svg style="position:absolute;left:910px;top:539px;" width="17" height="17" viewBox="0 0 17 17"><circle cx="8.5" cy="8.5" r="8.5" fill="#d4d4d4"/></svg>
<svg style="position:absolute;left:910px;top:563px;" width="17" height="17" viewBox="0 0 17 17"><circle cx="8.5" cy="8.5" r="8.5" fill="#d4d4d4"/></svg>
<svg style="position:absolute;left:910px;top:587px;" width="17" height="17" viewBox="0 0 17 17"><circle cx="8.5" cy="8.5" r="8.5" fill="#d4d4d4"/></svg>
<svg style="position:absolute;left:910px;top:611px;" width="17" height="17" viewBox="0 0 17 17"><circle cx="8.5" cy="8.5" r="8.5" fill="#d4d4d4"/></svg>
<svg style="position:absolute;left:1032px;top:443px;" width="17" height="17" viewBox="0 0 17 17"><circle cx="8.5" cy="8.5" r="8.5" fill="#d4d4d4"/></svg>
<svg style="position:absolute;left:1032px;top:467px;" width="17" height="17" viewBox="0 0 17 17"><circle cx="8.5" cy="8.5" r="8.5" fill="#d4d4d4"/></svg>
<svg style="position:absolute;left:1032px;top:491px;" width="17" height="17" viewBox="0 0 17 17"><circle cx="8.5" cy="8.5" r="8.5" fill="#d4d4d4"/></svg>
<svg style="position:absolute;left:1032px;top:515px;" width="17" height="17" viewBox="0 0 17 17"><circle cx="8.5" cy="8.5" r="8.5" fill="#d4d4d4"/></svg>
<svg style="position:absolute;left:1032px;top:539px;" width="17" height="17" viewBox="0 0 17 17"><circle cx="8.5" cy="8.5" r="8.5" fill="#d4d4d4"/></svg>
<svg style="position:absolute;left:1032px;top:563px;" width="17" height="17" viewBox="0 0 17 17"><circle cx="8.5" cy="8.5" r="8.5" fill="#d4d4d4"/></svg>
<svg style="position:absolute;left:1032px;top:587px;" width="17" height="17" viewBox="0 0 17 17"><circle cx="8.5" cy="8.5" r="8.5" fill="#d4d4d4"/></svg>
<svg style="position:absolute;left:1032px;top:611px;" width="17" height="17" viewBox="0 0 17 17"><circle cx="8.5" cy="8.5" r="8.5" fill="#d4d4d4"/></svg>
<svg style="position:absolute;left:1154px;top:443px;" width="17" height="17" viewBox="0 0 17 17"><circle cx="8.5" cy="8.5" r="8.5" fill="#d4d4d4"/></svg>
<svg style="position:absolute;left:1154px;top:467px;" width="17" height="17" viewBox="0 0 17 17"><circle cx="8.5" cy="8.5" r="8.5" fill="#d4d4d4"/></svg>
<svg style="position:absolute;left:1154px;top:491px;" width="17" height="17" viewBox="0 0 17 17"><circle cx="8.5" cy="8.5" r="8.5" fill="#d4d4d4"/></svg>
<svg style="position:absolute;left:1154px;top:515px;" width="17" height="17" viewBox="0 0 17 17"><circle cx="8.5" cy="8.5" r="8.5" fill="#d4d4d4"/></svg>
<svg style="position:absolute;left:1154px;top:539px;" width="17" height="17" viewBox="0 0 17 17"><circle cx="8.5" cy="8.5" r="8.5" fill="#d4d4d4"/></svg>
<svg style="position:absolute;left:1154px;top:563px;" width="17" height="17" viewBox="0 0 17 17"><circle cx="8.5" cy="8.5" r="8.5" fill="#d4d4d4"/><circle cx="8.5" cy="8.5" r="4.3" fill="#000"/></svg>
<svg style="position:absolute;left:1154px;top:587px;" width="17" height="17" viewBox="0 0 17 17"><circle cx="8.5" cy="8.5" r="8.5" fill="#d4d4d4"/></svg>
<div style="left:517px;top:124px;width:267px;height:414px;background:#4a4a4a;"></div>
<div style="left:519px;top:126px;width:263px;height:410px;background:#1c1c1c;"></div>
<svg style="position:absolute;left:524px;top:132px;" width="17" height="14" viewBox="0 0 17 14"><path d="M3,2.5 L15.2,12.8 M15.2,2.5 L3,12.8" stroke="#000" stroke-width="2.6"/><path d="M2.4,1.9 L14.4,12 M14.4,1.9 L2.4,12" stroke="#00f000" stroke-width="2.2"/><path d="M2.2,2 L2.2,12" stroke="#00f000" stroke-width="1.8"/><path d="M3.2,1.4 L5.6,1.4 M11.4,1.4 L14.2,1.4" stroke="#fff" stroke-width="0.9"/><path d="M6,5.6 L8.4,7.6" stroke="#d8ffd8" stroke-width="0.8"/></svg>
<div class="t" style="top:133px;color:#ffffff;font-size:12px;font-weight:700;letter-spacing:-0.450px;left:543px;">Show Columns</div>
<svg style="position:absolute;left:752px;top:127px;" width="24" height="24" viewBox="0 0 24 24"><circle cx="12" cy="12" r="10.6" fill="none" stroke="#e6e6e6" stroke-width="1.4"/><path d="M7.5,7.5 L16.5,16.5 M16.5,7.5 L7.5,16.5" stroke="#f0f0f0" stroke-width="2.4"/></svg>
<div style="left:525px;top:154px;width:251px;height:376px;background:linear-gradient(#242424,#0e0e0e);"></div>
<div style="left:533px;top:168px;width:2px;height:292px;background:#767676;"></div>
<div style="left:766px;top:168px;width:2px;height:292px;background:#767676;"></div>
<div style="left:533px;top:458px;width:235px;height:2px;background:#767676;"></div>
<div style="left:533px;top:168px;width:8px;height:2px;background:#767676;"></div>
<div style="left:626px;top:168px;width:142px;height:2px;background:#767676;"></div>
<div class="t" style="top:163px;color:#8c8c8c;letter-spacing:-0.338px;left:544px;">Visible Columns</div>
<div style="left:544px;top:174px;width:7px;height:1px;background:#8c8c8c;"></div>
<div style="left:542px;top:179px;width:217px;height:272px;background:#111;"></div>
<div style="left:543px;top:180px;width:215px;height:270px;background:#ffffff;"></div>
<div style="left:560px;top:180px;width:198px;height:15px;background:#8a8a8a;"></div>
<svg style="position:absolute;left:543px;top:180px;" width="17" height="15" viewBox="0 0 17 15"><polyline points="3,7.6 7.6,11.8 14.4,2.2" fill="none" stroke="#8a8a8a" stroke-width="2.8"/></svg>
<div class="t" style="top:182px;color:#ffffff;letter-spacing:0.004px;left:561px;">Select</div>
<svg style="position:absolute;left:543px;top:195px;" width="17" height="15" viewBox="0 0 17 15"><polyline points="3,7.6 7.6,11.8 14.4,2.2" fill="none" stroke="#8a8a8a" stroke-width="2.8"/></svg>
<div class="t" style="top:197px;color:#000000;letter-spacing:0.158px;left:561px;">No.</div>
<svg style="position:absolute;left:543px;top:210px;" width="17" height="15" viewBox="0 0 17 15"><polyline points="3,7.6 7.6,11.8 14.4,2.2" fill="none" stroke="#000" stroke-width="2.8"/></svg>
<div class="t" style="top:212px;color:#000000;letter-spacing:-0.117px;left:561px;">Customer Number</div>
<svg style="position:absolute;left:543px;top:225px;" width="17" height="15" viewBox="0 0 17 15"><polyline points="3,7.6 7.6,11.8 14.4,2.2" fill="none" stroke="#000" stroke-width="2.8"/></svg>
<div class="t" style="top:227px;color:#000000;letter-spacing:-0.138px;left:561px;">Company (lookup field)</div>
<div class="t" style="top:242px;color:#000000;letter-spacing:-0.067px;left:561px;">Company (edit field)</div>
<svg style="position:absolute;left:543px;top:255px;" width="17" height="15" viewBox="0 0 17 15"><polyline points="3,7.6 7.6,11.8 14.4,2.2" fill="none" stroke="#000" stroke-width="2.8"/></svg>
<div class="t" style="top:257px;color:#000000;letter-spacing:-0.196px;left:561px;">Company Location</div>
<svg style="position:absolute;left:543px;top:270px;" width="17" height="15" viewBox="0 0 17 15"><polyline points="3,7.6 7.6,11.8 14.4,2.2" fill="none" stroke="#000" stroke-width="2.8"/></svg>
<div class="t" style="top:272px;color:#000;left:561px;font-size:10px;">»</div>
<div class="t" style="top:272px;color:#000000;letter-spacing:-0.011px;left:576px;">Country (lookup list)</div>
<svg style="position:absolute;left:543px;top:285px;" width="17" height="15" viewBox="0 0 17 15"><polyline points="3,7.6 7.6,11.8 14.4,2.2" fill="none" stroke="#000" stroke-width="2.8"/></svg>
<div class="t" style="top:287px;color:#000;left:561px;font-size:10px;">»</div>
<div class="t" style="top:287px;color:#000000;letter-spacing:0.086px;left:576px;">State (pick list)</div>
<svg style="position:absolute;left:543px;top:300px;" width="17" height="15" viewBox="0 0 17 15"><polyline points="3,7.6 7.6,11.8 14.4,2.2" fill="none" stroke="#000" stroke-width="2.8"/></svg>
<div class="t" style="top:302px;color:#000;left:561px;font-size:10px;">»</div>
<div class="t" style="top:302px;color:#000000;letter-spacing:-0.091px;left:576px;">Postal Address</div>
<svg style="position:absolute;left:543px;top:315px;" width="17" height="15" viewBox="0 0 17 15"><polyline points="3,7.6 7.6,11.8 14.4,2.2" fill="none" stroke="#000" stroke-width="2.8"/></svg>
<div class="t" style="top:317px;color:#000;left:561px;font-size:10px;">»</div>
<div class="t" style="top:317px;color:#000;left:576px;font-size:10px;">»</div>
<div class="t" style="top:317px;color:#000000;letter-spacing:-0.227px;left:591px;">Zip</div>
<svg style="position:absolute;left:543px;top:330px;" width="17" height="15" viewBox="0 0 17 15"><polyline points="3,7.6 7.6,11.8 14.4,2.2" fill="none" stroke="#000" stroke-width="2.8"/></svg>
<div class="t" style="top:332px;color:#000;left:561px;font-size:10px;">»</div>
<div class="t" style="top:332px;color:#000;left:576px;font-size:10px;">»</div>
<div class="t" style="top:332px;color:#000000;letter-spacing:-0.088px;left:591px;">City</div>
<svg style="position:absolute;left:543px;top:345px;" width="17" height="15" viewBox="0 0 17 15"><polyline points="3,7.6 7.6,11.8 14.4,2.2" fill="none" stroke="#000" stroke-width="2.8"/></svg>
<div class="t" style="top:347px;color:#000;left:561px;font-size:10px;">»</div>
<div class="t" style="top:347px;color:#000;left:576px;font-size:10px;">»</div>
<div class="t" style="top:347px;color:#000000;letter-spacing:-0.108px;left:591px;">Address</div>
<svg style="position:absolute;left:543px;top:360px;" width="17" height="15" viewBox="0 0 17 15"><polyline points="3,7.6 7.6,11.8 14.4,2.2" fill="none" stroke="#8a8a8a" stroke-width="2.8"/></svg>
<div class="t" style="top:362px;color:#000000;letter-spacing:-0.051px;left:561px;">Tax Rate (calc.)</div>
<svg style="position:absolute;left:543px;top:375px;" width="17" height="15" viewBox="0 0 17 15"><polyline points="3,7.6 7.6,11.8 14.4,2.2" fill="none" stroke="#000" stroke-width="2.8"/></svg>
<div class="t" style="top:377px;color:#000000;letter-spacing:-0.052px;left:561px;">Contact Person</div>
<svg style="position:absolute;left:543px;top:390px;" width="17" height="15" viewBox="0 0 17 15"><polyline points="3,7.6 7.6,11.8 14.4,2.2" fill="none" stroke="#000" stroke-width="2.8"/></svg>
<div class="t" style="top:392px;color:#000;left:561px;font-size:10px;">»</div>
<div class="t" style="top:392px;color:#000000;letter-spacing:-0.036px;left:576px;">Sales Manager (autocomplete+list)</div>
<svg style="position:absolute;left:543px;top:405px;" width="17" height="15" viewBox="0 0 17 15"><polyline points="3,7.6 7.6,11.8 14.4,2.2" fill="none" stroke="#000" stroke-width="2.8"/></svg>
<div class="t" style="top:407px;color:#000;left:561px;font-size:10px;">»</div>
<div class="t" style="top:407px;color:#000000;letter-spacing:0.033px;left:576px;">Phone (autoload list)</div>
<div class="t" style="top:422px;color:#000;left:561px;font-size:10px;">»</div>
<div class="t" style="top:422px;color:#000000;letter-spacing:-0.090px;left:576px;">FAX (autocomplete)</div>
<svg style="position:absolute;left:543px;top:435px;" width="17" height="15" viewBox="0 0 17 15"><polyline points="3,7.6 7.6,11.8 14.4,2.2" fill="none" stroke="#000" stroke-width="2.8"/></svg>
<div class="t" style="top:437px;color:#000;left:561px;font-size:10px;">»</div>
<div class="t" style="top:437px;color:#000000;letter-spacing:-0.017px;left:576px;">Last Invoice Date (calendar)</div>
<div style="left:544px;top:468px;width:17px;height:17px;background:#d4d4d4;"></div>
<svg style="position:absolute;left:544px;top:468px;" width="17" height="17" viewBox="0 0 17 17"><polyline points="2.6,8.2 7,12.6 14.2,3" fill="none" stroke="#111" stroke-width="2.6" stroke-linecap="butt" stroke-linejoin="miter"/></svg>
<div class="t" style="top:470px;color:#ececec;letter-spacing:-0.007px;left:564px;">Stretch Columns  (added in run-time)</div>
<div style="left:564px;top:481px;width:6px;height:1px;background:#ececec;"></div>
<div style="left:613px;top:497px;width:75px;height:25px;background:#0e0e0e;box-sizing:border-box;border:2px solid #f4f4f4;"></div>
<div class="t" style="top:504px;color:#ececec;letter-spacing:-0.653px;left:450.5px;width:400px;text-align:center;">OK</div>
<div style="left:693px;top:497px;width:75px;height:25px;background:#0e0e0e;box-sizing:border-box;border:2px solid #f4f4f4;"></div>
<div class="t" style="top:504px;color:#ececec;letter-spacing:-0.006px;left:530.5px;width:400px;text-align:center;">Help</div>
<div style="left:720px;top:516px;width:7px;height:1px;background:#ececec;"></div>
</body></html>
